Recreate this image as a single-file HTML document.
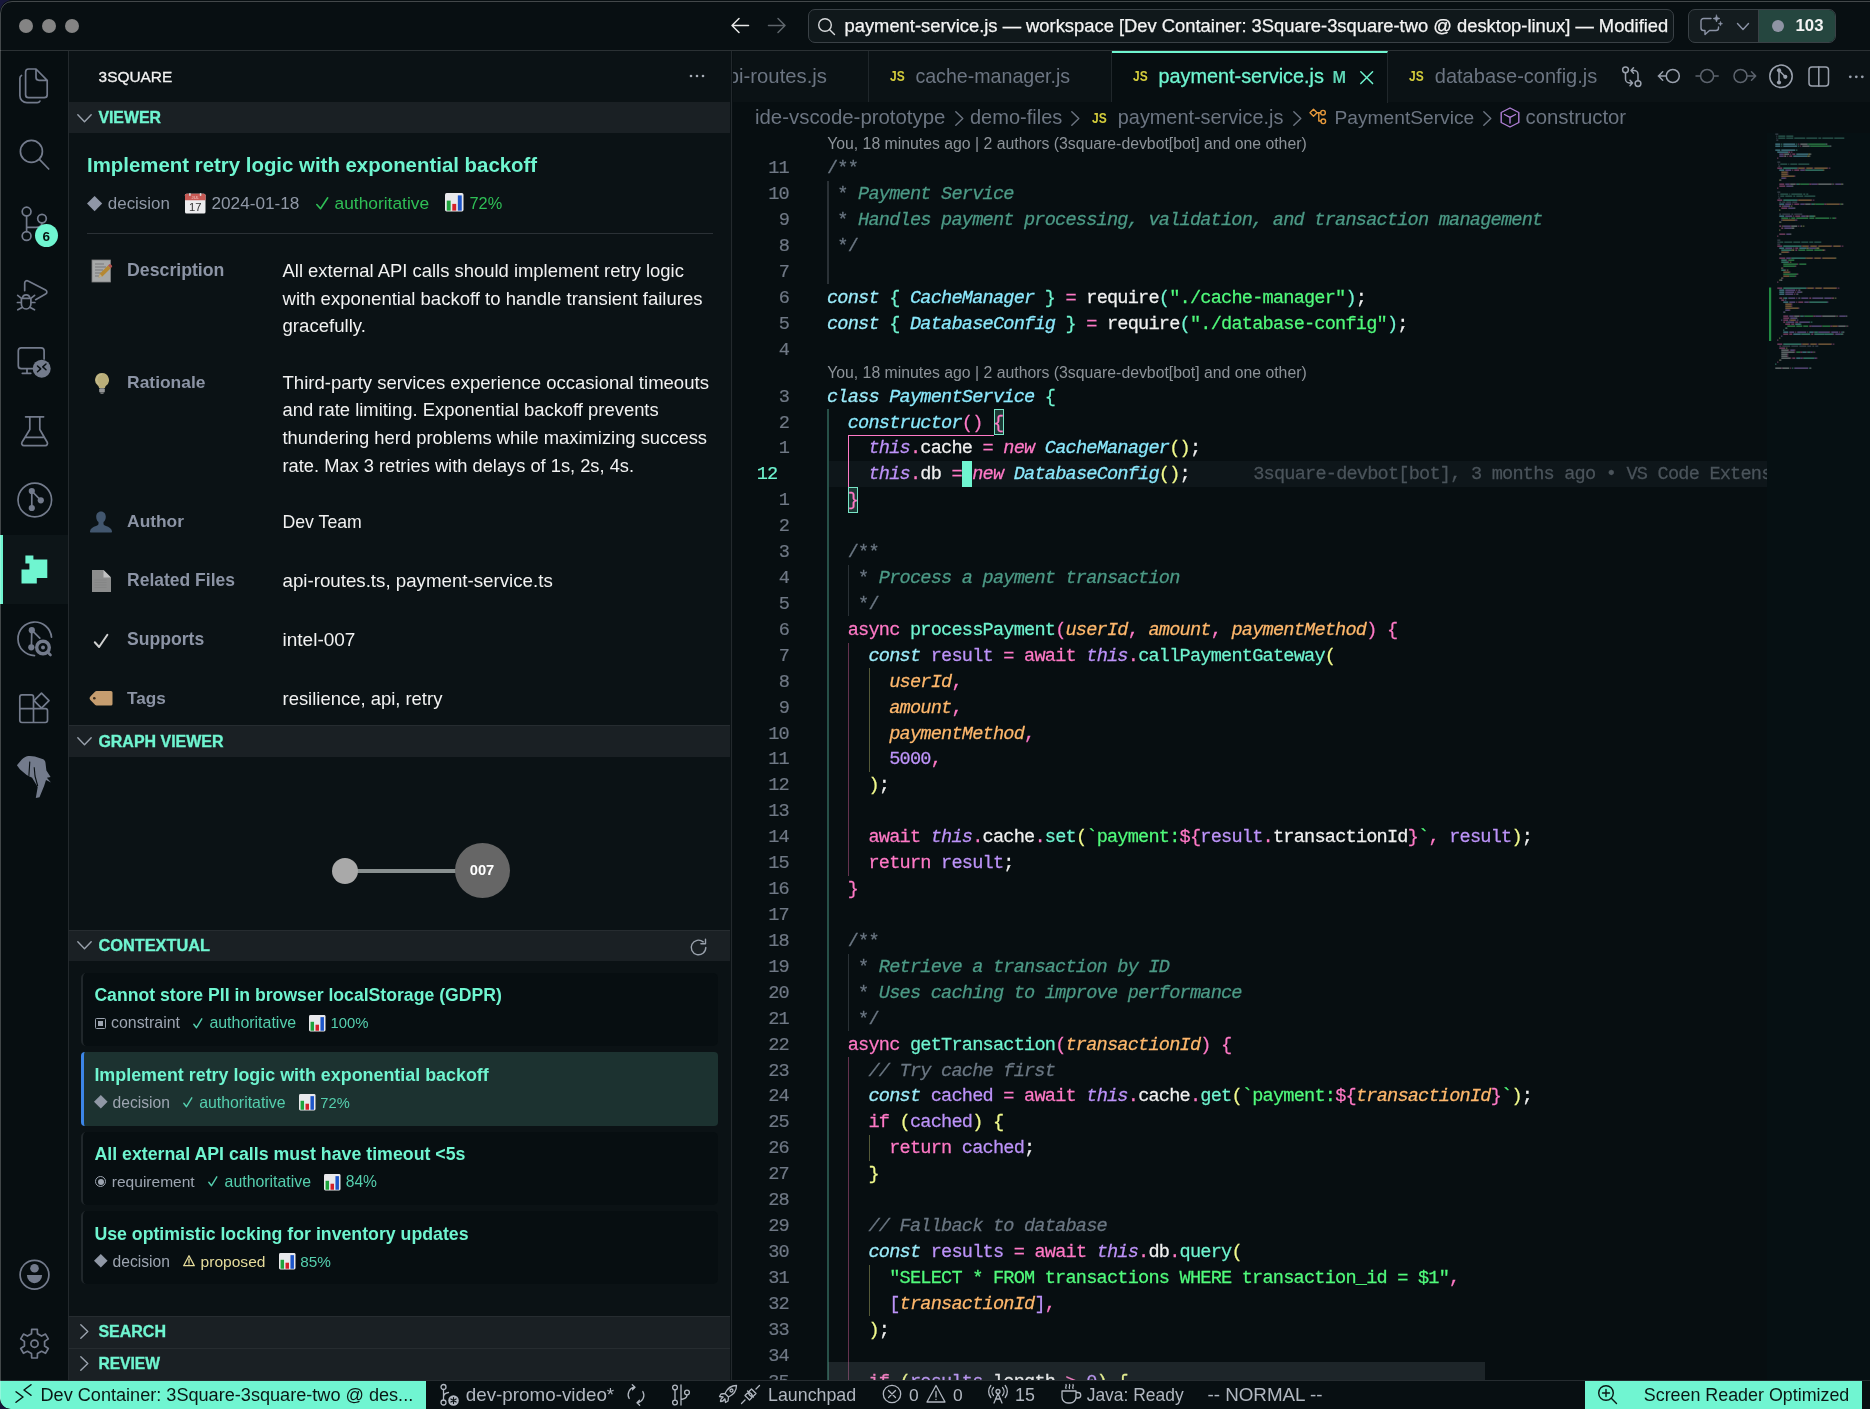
<!DOCTYPE html>
<html lang="en">
<head>
<meta charset="utf-8">
<title>payment-service.js — workspace</title>
<style>
*{box-sizing:border-box;margin:0;padding:0}
html,body{width:1870px;height:1409px;overflow:hidden;background:#17173a}
body{font-family:"Liberation Sans",sans-serif;color:#e6e6e6;position:relative}
.abs{position:absolute}
#win{position:absolute;left:0;top:0;width:1870px;height:1409px;border-radius:13px 0 0 11px;overflow:hidden;will-change:transform}
#winbg{position:absolute;left:0;top:0;width:1870px;height:1409px;background:#080f12;border-radius:13px 0 0 11px}
#wintop{position:absolute;left:0;top:1px;width:1884px;height:1420px;border:1px solid rgba(255,255,255,.24);z-index:50;border-radius:12px 0 0 11px;pointer-events:none}
svg{display:block;overflow:visible}
.t{position:absolute;white-space:pre;line-height:1}
/* title bar */
#titlebar{position:absolute;left:0;top:0;width:1870px;height:51px;background:#080f12;border-bottom:1px solid #2b3134}
.dot{position:absolute;top:19px;width:14px;height:14px;border-radius:50%;background:#848484}
#cmd{position:absolute;left:808px;top:9px;width:866px;height:34px;border:1px solid #3a4146;border-radius:7px;background:#10181b}
#cmd .t{left:35px;top:7px;font-size:17.6px;color:#f2f2f2;letter-spacing:0.12px}
#chat{position:absolute;left:1688px;top:9px;width:148px;height:34px;border:1px solid #3a4146;border-radius:7px;background:#141c1f;overflow:hidden}
#chat .pill{position:absolute;left:69px;top:0;width:79px;height:34px;background:#25463f;border-left:1px solid #3a4146}
/* activity bar */
#act{position:absolute;left:0;top:51px;width:69px;height:1330px;background:#070e11;border-right:1px solid #23292d}
.ai{position:absolute;left:19px;width:30px;height:30px}
.ai svg{width:30px;height:30px;fill:none;stroke:#7e8695;stroke-width:1.25;stroke-linecap:round;stroke-linejoin:round}
/* sidebar */
#side{position:absolute;left:69px;top:51px;width:663px;height:1330px;background:#0b1215;border-right:1px solid #23292d}
.sec{position:absolute;left:0;width:662px;height:31px;background:#1a2024}
.sec .lbl{position:absolute;left:29px;top:8px;font-size:15.5px;font-weight:700;color:#6ff5d0;letter-spacing:0.35px;line-height:1;white-space:pre}
.sec svg{position:absolute;left:7px;top:8px;width:16px;height:16px;fill:none;stroke:#9aa2ad;stroke-width:1.4;stroke-linecap:round;stroke-linejoin:round}
.lab{position:absolute;left:58px;font-size:17.3px;font-weight:700;color:#8b93a0;line-height:1;white-space:pre}
.val{position:absolute;left:213px;font-size:17.3px;color:#f0f0f0;line-height:27.7px;white-space:pre}
.ico{position:absolute;left:21px;width:22px;height:22px}
.card{position:absolute;left:13px;width:636px;height:73px;background:#070e11;border-left:2px solid #1d2428;border-radius:4px}
.card.sel{background:#1b3331;border-left:3px solid #3d8bea}
.card .ct{position:absolute;left:10px;top:14px;font-size:17.5px;font-weight:700;color:#6ff5d0;line-height:1;white-space:pre}
.card .cm{position:absolute;left:10px;top:42px;font-size:15px;color:#a0a8b4;line-height:1;white-space:pre;height:18px}
.card.sel .ct,.card.sel .cm{left:9px}
.gr{color:#3fb950}
.mint{color:#5fd9b8}
.bars{display:inline-block;vertical-align:-3px;width:17px;height:17px;margin:0 4px 0 0}
/* editor */
#ed{position:absolute;left:733px;top:51px;width:1137px;height:1330px;background:#070e11;overflow:hidden}
#tabs{position:absolute;left:0;top:0;width:1137px;height:51px;background:#0b1215}
.tab{position:absolute;top:0;height:51px;border-right:1px solid #23292d}
.tab .t{top:15px;font-size:19.4px;color:#6f7884}
.js{position:absolute;top:19px;font-size:12.5px;font-weight:700;color:#d8cf3e;letter-spacing:-0.3px;line-height:1}
#bc{position:absolute;left:0;top:51px;width:1137px;height:31px;background:#070e11}
#bc .t{top:6px;font-size:19.4px;color:#6f7884}
.lens{position:absolute;left:94px;font-size:15px;color:#8f959c;line-height:1;white-space:pre}
.ln{position:absolute;left:0;width:56px;text-align:right;font-family:"Liberation Mono",monospace;font-size:18.600px;letter-spacing:-.790px;color:#6f7885;line-height:26px;height:26px;white-space:pre;margin-top:1.350px;-webkit-text-stroke:.200px currentColor;transform:scaleY(1.03);transform-origin:0 18.400px}
.cl{position:absolute;left:94px;font-family:"Liberation Mono",monospace;font-size:18.600px;letter-spacing:-.790px;color:#f0f0f0;line-height:26px;height:26px;white-space:pre;margin-top:1.350px;-webkit-text-stroke:.250px currentColor;transform:scaleY(1.03);transform-origin:0 18.400px}
.cl i{font-style:italic}
.k{color:#9cecfb;font-style:italic}.c{color:#8be9fd;font-style:italic}
.p{color:#ff79c6}.g{color:#50fa7b}.m{color:#6ff5d0}.y{color:#f1fa8c}.u{color:#bd93f9}
.ui{color:#bd93f9;font-style:italic}.o{color:#ffb86c;font-style:italic}.pi{color:#ff79c6;font-style:italic}
.cm1{color:#6b7783}.cm2{color:#4c9a86;font-style:italic}.cm3{color:#6b7783;font-style:italic}
.guide{position:absolute;width:1px;background:#2a3236}
/* status bar */
#status{position:absolute;left:0;top:1381px;width:1870px;height:28px;background:#080f12;border-top:1px solid #23292d}
#status .t{top:5px;font-size:17.4px;color:#b4bac2}
.sb svg{fill:none;stroke:#b4bac2;stroke-width:1.2;stroke-linecap:round;stroke-linejoin:round}
</style>
</head>
<body>
<div id="winbg"></div>
<div id="win">
<div id="wintop"></div>
<div id="titlebar">
<div class="dot" style="left:19px"></div>
<div class="dot" style="left:42px"></div>
<div class="dot" style="left:65px"></div>
<svg class="abs" style="left:730px;top:16px" width="20" height="20" viewBox="0 0 20 20" fill="none" stroke="#e8e8e8" stroke-width="1.5" stroke-linecap="round" stroke-linejoin="round"><path d="M18.5 9.5H2M9 2.5L2 9.5L9 16.5"/></svg>
<svg class="abs" style="left:767px;top:16px" width="20" height="20" viewBox="0 0 20 20" fill="none" stroke="#5f666c" stroke-width="1.5" stroke-linecap="round" stroke-linejoin="round"><path d="M1.5 9.5H18M11 2.5L18 9.5L11 16.5"/></svg>
<div id="cmd"><svg class="abs" style="left:8px;top:7px" width="20" height="20" viewBox="0 0 20 20" fill="none" stroke="#d8dadc" stroke-width="1.4" stroke-linecap="round"><circle cx="8" cy="8" r="6.3"/><path d="M12.7 12.7L17.5 17.5"/></svg></div>
<div class="t" style="left:844.5px;top:15px;font-size:18.38px;line-height:21px;color:#f4f4f4;-webkit-text-stroke:.250px #f4f4f4;">payment-service.js — workspace [Dev Container: 3Square-3square-two @ desktop-linux] — Modified</div>
<div id="chat"><div class="pill"></div><svg class="abs" style="left:10px;top:4px" width="25" height="24" viewBox="0 0 25 24" fill="none" stroke="#8b93a6" stroke-width="1.4" stroke-linecap="round" stroke-linejoin="round"><path d="M12 4.5H4.5a2.5 2.5 0 0 0-2.5 2.5v7a2.5 2.5 0 0 0 2.5 2.5H6v4l4.5-4H17a2.5 2.5 0 0 0 2.5-2.5V13"/><path d="M17.5 1l.9 2.6 2.6.9-2.6.9-.9 2.6-.9-2.6-2.6-.9 2.6-.9z" fill="#8b93a6" stroke-width="0.6"/><path d="M21.5 7.5l.6 1.6 1.6.6-1.6.6-.6 1.6-.6-1.6-1.6-.6 1.6-.6z" fill="#8b93a6" stroke-width="0.4"/></svg><svg class="abs" style="left:47px;top:12px" width="14" height="10" viewBox="0 0 14 10" fill="none" stroke="#8b93a6" stroke-width="1.4" stroke-linecap="round" stroke-linejoin="round"><path d="M1.5 1.5L7 7.5L12.5 1.5"/></svg><div class="abs" style="left:83px;top:10px;width:12px;height:12px;border-radius:50%;background:#8f94a4"></div></div>
<div class="t" style="left:1795.5px;top:16px;font-size:16.78px;line-height:19px;font-weight:700;color:#f4f4f4;">103</div>
</div>
<div id="act"></div>
<div class="abs" style="left:0;top:535px;width:68px;height:69px;background:#0d1518"></div>
<div class="abs" style="left:0;top:535px;width:2.5px;height:69px;background:#6ff5d0"></div>
<svg class="abs" style="left:0;top:51px" width="69" height="1330" viewBox="0 51 69 1330" fill="none" stroke="#737b8c" stroke-width="1.7" stroke-linecap="round" stroke-linejoin="round">
<path d="M36 69H28.600a3 3 0 0 0-3 3v22.700a3 3 0 0 0 3 3h15.600a3 3 0 0 0 3-3V80.300z M36 69.300v8a3 3 0 0 0 3 3h8"/>
<path d="M21.5 75.5a3 3 0 0 0-1.6 2.7v17.5a7 7 0 0 0 7 7h10.3a3 3 0 0 0 2.7-1.6"/>
<circle cx="31.4" cy="151.4" r="11"/><path d="M39.4 159.4L48.7 169"/>
<circle cx="26.6" cy="211.6" r="4.4"/><circle cx="42" cy="218.6" r="4.3"/><circle cx="26.6" cy="236" r="4.4"/><path d="M26.6 216v15.6M42 223c0 4-3 4.3-6 4.3h-9.4"/>
<path d="M24.700 290.600v-7.600a2.300 2.300 0 0 1 3.400-2l17.500 9a2.300 2.300 0 0 1 0 4.100l-10 5.600"/>
<path d="M21.400 298.400h9.500v5.600a4.750 5 0 0 1-9.500 0z M22.300 298.400a3.900 4.300 0 0 1 7.700 0 M21.400 298.400l-3.700-3M30.900 298.400l3.700-3M21.400 302.500h-4M30.900 302.500h4M22.500 307.200l-4.700 2.600M29.800 307.200l4.700 2.600"/>
<path d="M33 368.7H21.3a3 3 0 0 1-3-3V350.8a3 3 0 0 1 3-3h19.8a3 3 0 0 1 3 3V359M27 369v4.3M22.3 373.3h8.5"/>
<circle cx="41.7" cy="368.7" r="9" fill="#737b8c" stroke="none"/><path d="M37.5 366l3.2 2.9-3.2 2.9M46 364l-3.2 2.9 3.2 2.9" stroke="#070e11" stroke-width="1.5"/>
<path d="M25.6 416.8h18M29.8 417v12.5L22 442.3a2.2 2.2 0 0 0 1.9 3.3h21.4a2.2 2.2 0 0 0 1.9-3.3L39.8 429.5V417M26 437.3h17.4"/>
<circle cx="34.8" cy="500" r="16.8"/><g fill="#737b8c" stroke="none"><circle cx="31.8" cy="491" r="3.1"/><circle cx="40.8" cy="500.3" r="3.1"/><circle cx="31.8" cy="508" r="3.1"/></g><path d="M31.8 491v17M31.8 491l9 9.3"/>
<path d="M25.4 555.6h8v4h13.9v18.4H36.8v5.4H21.5v-13.9h7.9v-6h-4z" fill="#6ff5d0" stroke="none"/>
<path d="M34.5 655.6a16.8 16.8 0 1 1 17-18.5"/><g fill="#737b8c" stroke="none"><circle cx="31.8" cy="630.2" r="3.1"/><circle cx="31.3" cy="647.3" r="3.1"/></g><path d="M31.8 630.2l-.4 17M31.8 630.2l8 8"/><circle cx="43" cy="647.5" r="6.3" stroke-width="3.4"/><circle cx="43" cy="647.5" r="2" fill="#737b8c" stroke="none"/><path d="M47.5 652l3 3" stroke-width="2.6"/>
<path d="M33.500 708.600v-11.500a2.200 2.200 0 0 0-2.200-2.200H22a2.200 2.200 0 0 0-2.200 2.200v23.200a2.200 2.200 0 0 0 2.200 2.200h23.300a2.200 2.200 0 0 0 2.200-2.200v-9.500a2.200 2.200 0 0 0-2.200-2.200H19.800M33.500 708.600v13.800"/><path d="M41.5 693.2L49.0 700.7L41.5 708.2L34.0 700.7z" stroke-linejoin="round"/>
<path d="M16.900 765.300L22 759.300C24 757.300 26.500 756.300 28.500 756.100C30.500 755.900 33 756.200 34.900 756.600L43.200 759.300C44.800 760.200 45.300 761.500 45.500 763L46.400 770.400L50.600 776.900L46.900 777.800L51 782.400L46 780.100L44.100 786.100L39.500 797.200L35.800 798.100L37.700 787L32.100 777.800L26.600 775L20.100 769.500z" fill="#737b8c" stroke="none"/><path d="M29.800 761.600L28.900 775.900M34.200 767.200L35 776 37.700 786" stroke="#070e11" stroke-width="1.100" stroke-linecap="butt"/>
<circle cx="34.5" cy="1274.700" r="14.400"/><circle cx="34.5" cy="1268.200" r="4.300" fill="#737b8c" stroke="none"/><path d="M26.900 1275h15.200a7.600 8.200 0 0 1-15.200 0z" fill="#737b8c" stroke="none"/>
<path d="M31.5 1333.8 L31.7 1329.4 L37.3 1329.4 L37.5 1333.8 L41.6 1336.1 L45.5 1334.1 L48.3 1338.9 L44.6 1341.4 L44.6 1346.0 L48.3 1348.5 L45.5 1353.3 L41.6 1351.3 L37.5 1353.6 L37.3 1358.0 L31.7 1358.0 L31.5 1353.6 L27.4 1351.3 L23.5 1353.3 L20.7 1348.5 L24.4 1346.0 L24.4 1341.4 L20.7 1338.9 L23.5 1334.1 L27.4 1336.1z"/><circle cx="34.5" cy="1343.7" r="3.6"/>
</svg>
<div class="abs" style="left:34.800px;top:224.400px;width:23px;height:23px;border-radius:50%;background:#6ff5d0"></div>
<div class="t" style="left:42.6px;top:229px;font-size:13.5px;line-height:15px;font-weight:700;color:#07120f;">6</div>
<div id="side"></div>
<div class="t" style="left:98.6px;top:68px;font-size:15.42px;line-height:17px;color:#f2f2f2;-webkit-text-stroke:.300px #f2f2f2;">3SQUARE</div>
<svg class="abs" style="left:689px;top:74px" width="16" height="4" viewBox="0 0 16 4" fill="#a7adb6"><circle cx="2" cy="2" r="1.3"/><circle cx="8" cy="2" r="1.3"/><circle cx="14" cy="2" r="1.3"/></svg>
<div class="abs" style="left:69px;top:102px;width:661px;height:31px;background:#1a2024;"></div>
<svg class="abs" style="left:76.5px;top:113.5px" width="15" height="9" viewBox="0 0 15 9" fill="none" stroke="#9aa2ad" stroke-width="1.4" stroke-linecap="round" stroke-linejoin="round"><path d="M0.8 0.8L7.5 7.800L14.200 0.800"/></svg>
<div class="t" style="left:98.4px;top:109px;font-size:15.87px;line-height:17px;font-weight:700;color:#6ff5d0;-webkit-text-stroke:.350px #6ff5d0;">VIEWER</div>
<div class="t" style="left:87.0px;top:154px;font-size:20.42px;line-height:22px;font-weight:700;color:#6ff5d0;">Implement retry logic with exponential backoff</div>
<svg class="abs" style="left:86.5px;top:195.9px" width="15.2" height="15.2" viewBox="-1 -1 2 2"><path d="M0-1L1 0L0 1L-1 0z" fill="#8f96a6"/></svg>
<div class="t" style="left:107.8px;top:194px;font-size:16.95px;line-height:19px;color:#9098a6;">decision</div>
<svg class="abs" style="left:184.5px;top:192.8px" width="20.5" height="20.5" viewBox="0 0 20 20"><rect x="0" y="0.8" width="20" height="19.2" rx="1.5" fill="#ececee"/><path d="M0 2.3a1.500 1.500 0 0 1 1.500-1.500h17a1.500 1.500 0 0 1 1.500 1.500V7H0z" fill="#c85a55"/><rect x="4" y="0" width="1.6" height="3" rx="0.8" fill="#d9d9d9"/><rect x="14.400" y="0" width="1.600" height="3" rx="0.800" fill="#d9d9d9"/><text x="10" y="17.500" font-family="Liberation Sans, sans-serif" font-size="11" text-anchor="middle" fill="#333">17</text><text x="10" y="6" font-family="Liberation Sans, sans-serif" font-size="4" text-anchor="middle" fill="#f3c9c6">JUL</text></svg>
<div class="t" style="left:211.5px;top:193px;font-size:17.2px;line-height:20px;color:#9098a6;">2024-01-18</div>
<svg class="abs" style="left:315.5px;top:196.5px" width="12.5" height="12.5" viewBox="0 0 12.5 12.5" fill="none" stroke="#2fbf56" stroke-width="1.6" stroke-linecap="round" stroke-linejoin="round"><path d="M0.8 7.5L4.5 11.7L11.7 0.8"/></svg>
<div class="t" style="left:334.5px;top:193px;font-size:17.38px;line-height:20px;color:#2fbf56;">authoritative</div>
<svg class="abs" style="left:444.7px;top:193.0px" width="18.5" height="18.5" viewBox="0 0 17 17"><rect x="0" y="0" width="17" height="17" rx="1.5" fill="#e9e9ec"/><rect x="1.6" y="7" width="3.6" height="9.2" fill="#1ea33c"/><rect x="6.700" y="10" width="3.600" height="6.200" fill="#d3202a"/><rect x="11.800" y="2.200" width="3.600" height="14" fill="#1d55c9"/></svg>
<div class="t" style="left:469.5px;top:194px;font-size:16.34px;line-height:18px;color:#2fbf56;">72%</div>
<div class="abs" style="left:86.5px;top:232.5px;width:626.5px;height:1px;background:#2b3136"></div>
<div class="t" style="left:127.1px;top:260px;font-size:17.71px;line-height:20px;font-weight:700;color:#8c94a5;">Description</div>
<div class="t" style="left:282.5px;top:260px;font-size:18.43px;line-height:21px;color:#f2f2f2;">All external API calls should implement retry logic</div>
<div class="t" style="left:282.5px;top:288px;font-size:18.55px;line-height:21px;color:#f2f2f2;">with exponential backoff to handle transient failures</div>
<div class="t" style="left:282.5px;top:315px;font-size:18.62px;line-height:21px;color:#f2f2f2;">gracefully.</div>
<div class="t" style="left:127.1px;top:372px;font-size:17.42px;line-height:20px;font-weight:700;color:#8c94a5;">Rationale</div>
<div class="t" style="left:282.5px;top:372px;font-size:18.54px;line-height:21px;color:#f2f2f2;">Third-party services experience occasional timeouts</div>
<div class="t" style="left:282.5px;top:399px;font-size:18.42px;line-height:21px;color:#f2f2f2;">and rate limiting. Exponential backoff prevents</div>
<div class="t" style="left:282.5px;top:427px;font-size:18.38px;line-height:21px;color:#f2f2f2;">thundering herd problems while maximizing success</div>
<div class="t" style="left:282.5px;top:455px;font-size:18.3px;line-height:21px;color:#f2f2f2;">rate. Max 3 retries with delays of 1s, 2s, 4s.</div>
<div class="t" style="left:127.1px;top:511px;font-size:17.36px;line-height:20px;font-weight:700;color:#8c94a5;">Author</div>
<div class="t" style="left:282.5px;top:512px;font-size:17.69px;line-height:20px;color:#f2f2f2;">Dev Team</div>
<div class="t" style="left:127.1px;top:570px;font-size:17.49px;line-height:20px;font-weight:700;color:#8c94a5;">Related Files</div>
<div class="t" style="left:282.5px;top:570px;font-size:18.72px;line-height:21px;color:#f2f2f2;">api-routes.ts, payment-service.ts</div>
<div class="t" style="left:127.1px;top:629px;font-size:17.57px;line-height:20px;font-weight:700;color:#8c94a5;">Supports</div>
<div class="t" style="left:282.5px;top:629px;font-size:19.03px;line-height:21px;color:#f2f2f2;">intel-007</div>
<div class="t" style="left:127.1px;top:688px;font-size:17.17px;line-height:20px;font-weight:700;color:#8c94a5;">Tags</div>
<div class="t" style="left:282.5px;top:688px;font-size:18.45px;line-height:21px;color:#f2f2f2;">resilience, api, retry</div>
<svg class="abs" style="left:91.5px;top:260px;opacity:.8" width="20" height="22" viewBox="0 0 20 22"><rect x="0" y="0" width="18.5" height="22" fill="#cfcfcf"/><rect x="0" y="0" width="18.500" height="22" fill="none" stroke="#9a9a9a" stroke-width="0.800"/><path d="M3 4h9M3 7h11M3 10h8M3 13h6M3 16h5" stroke="#8b8b8b" stroke-width="0.900"/><path d="M6.500 17.500l1.200-3.800L16 5.500l2.700 2.700-8.300 8.200z" fill="#e0a63a"/><path d="M16 5.500l1.300-1.200a1 1 0 0 1 1.400 0l1.200 1.200a1 1 0 0 1 0 1.400l-1.200 1.300z" fill="#d8635e"/><path d="M6.500 17.500l1.200-3.800 2.700 2.700z" fill="#e9d3a5"/></svg>
<svg class="abs" style="left:94.500px;top:372.500px;opacity:.8" width="14" height="21" viewBox="0 0 14 21"><path d="M7 0a7 7 0 0 0-4 12.700c.7.600 1 1.500 1 2.300h6c0-.800.300-1.700 1-2.300A7 7 0 0 0 7 0z" fill="#e6d693"/><path d="M7 1.500a5.500 5.500 0 0 0-3 10" stroke="#f4e6ad" stroke-width="1.200" fill="none"/><rect x="4.200" y="15.300" width="5.600" height="4.200" rx="1" fill="#b9b9b9"/><rect x="5.300" y="19.500" width="3.400" height="1.500" rx=".700" fill="#8a8a8a"/></svg>
<svg class="abs" style="left:90px;top:511px" width="22" height="22" viewBox="0 0 22 22"><path d="M11 0.500c3 0 4.800 2.300 4.800 5.200 0 2.300-1 4.300-2.300 5.400v1.600c0 1 .8 1.600 2.500 2.200 3 1 5.500 2.300 6 5.300.1.800-.3 1.300-1 1.300H1c-.700 0-1.100-.500-1-1.300.500-3 3-4.300 6-5.300 1.700-.600 2.500-1.200 2.500-2.200v-1.600C7.200 10 6.200 8 6.200 5.700 6.200 2.800 8 .500 11 .500z" fill="#42566e"/></svg>
<svg class="abs" style="left:91.500px;top:569.700px;opacity:.9" width="19" height="22" viewBox="0 0 19 22"><path d="M0 0h11.500L19 7.500V22H0z" fill="#9b9b9b"/><path d="M11.500 0L19 7.500h-7.500z" fill="#d5d5d5"/><path d="M2.500 10h12M2.500 12.500h12M2.500 15h12M2.500 17.500h12" stroke="#8e8e8e" stroke-width=".600"/></svg>
<svg class="abs" style="left:93.9px;top:633.9px" width="14.2" height="13.8" viewBox="0 0 14.2 13.8" fill="none" stroke="#d0d0d0" stroke-width="2" stroke-linecap="round" stroke-linejoin="round"><path d="M0.8 8.3L5.1 13.0L13.399999999999999 0.8"/></svg>
<svg class="abs" style="left:89.700px;top:691px" width="22.500" height="14.500" viewBox="0 0 22.500 14.500"><path d="M6.500 0H21a1.500 1.500 0 0 1 1.500 1.500v11.500a1.500 1.500 0 0 1-1.500 1.500H6.500a2 2 0 0 1-1.300-.500L.6 9.200a2.700 2.700 0 0 1 0-3.900L5.200.5A2 2 0 0 1 6.500 0z" fill="#c69d6f"/><circle cx="4.300" cy="7.250" r="1.300" fill="#3b2c1c"/></svg>
<div class="abs" style="left:69px;top:725px;width:661px;height:32px;background:#1a2024;border-top:1px solid #262c30"></div>
<svg class="abs" style="left:76.5px;top:736.5px" width="15" height="9" viewBox="0 0 15 9" fill="none" stroke="#9aa2ad" stroke-width="1.4" stroke-linecap="round" stroke-linejoin="round"><path d="M0.8 0.8L7.5 7.800L14.200 0.800"/></svg>
<div class="t" style="left:98.4px;top:733px;font-size:15.98px;line-height:17px;font-weight:700;color:#6ff5d0;-webkit-text-stroke:.350px #6ff5d0;">GRAPH VIEWER</div>
<div class="abs" style="left:345px;top:868.800px;width:137px;height:4px;background:#899090"></div>
<div class="abs" style="left:331.900px;top:857.500px;width:26.600px;height:26.600px;border-radius:50%;background:#a9a9a9"></div>
<div class="abs" style="left:454.500px;top:843.300px;width:55px;height:55px;border-radius:50%;background:#666"></div>
<div class="t" style="left:469.7px;top:862px;font-size:14.74px;line-height:16px;font-weight:700;color:#fff;">007</div>
<div class="abs" style="left:69px;top:929.5px;width:661px;height:31px;background:#1a2024;border-top:1px solid #262c30"></div>
<svg class="abs" style="left:76.5px;top:941.0px" width="15" height="9" viewBox="0 0 15 9" fill="none" stroke="#9aa2ad" stroke-width="1.4" stroke-linecap="round" stroke-linejoin="round"><path d="M0.8 0.8L7.5 7.800L14.200 0.800"/></svg>
<div class="t" style="left:98.4px;top:936px;font-size:16.33px;line-height:18px;font-weight:700;color:#6ff5d0;-webkit-text-stroke:.350px #6ff5d0;">CONTEXTUAL</div>
<svg class="abs" style="left:689px;top:937.500px" width="19" height="19" viewBox="0 0 19 19" fill="none" stroke="#9aa2ad" stroke-width="1.400" stroke-linecap="round" stroke-linejoin="round"><path d="M16.800 9.500a7.300 7.300 0 1 1-2.600-5.600"/><path d="M16.500 1.200v4.600h-4.600"/></svg>
<div class="abs" style="left:81px;top:973px;width:637px;height:73px;background:#070e11;border-left:2px solid #20272b;border-radius:5px"></div>
<div class="t" style="left:94.4px;top:985px;font-size:17.64px;line-height:20px;font-weight:700;color:#6ff5d0;">Cannot store PII in browser localStorage (GDPR)</div>
<div class="abs" style="left:95px;top:1018px;width:10.600px;height:10.600px;border:1.300px solid #9da5b1;border-radius:1.500px"></div><div class="abs" style="left:97.600px;top:1020.6px;width:5.400px;height:5.400px;background:#9da5b1"></div>
<div class="t" style="left:111.0px;top:1014px;font-size:15.92px;line-height:17px;color:#9da5b1;">constraint</div>
<svg class="abs" style="left:193.3px;top:1017.5px" width="9.6" height="10.5" viewBox="0 0 9.6 10.5" fill="none" stroke="#55cfae" stroke-width="1.4" stroke-linecap="round" stroke-linejoin="round"><path d="M0.8 6.3L3.5 9.7L8.799999999999999 0.8"/></svg>
<div class="t" style="left:209.4px;top:1014px;font-size:15.95px;line-height:17px;color:#55cfae;">authoritative</div>
<svg class="abs" style="left:308.8px;top:1015.4px" width="16.5" height="16.5" viewBox="0 0 17 17"><rect x="0" y="0" width="17" height="17" rx="1.5" fill="#e9e9ec"/><rect x="1.6" y="7" width="3.6" height="9.2" fill="#1ea33c"/><rect x="6.700" y="10" width="3.600" height="6.200" fill="#d3202a"/><rect x="11.800" y="2.200" width="3.600" height="14" fill="#1d55c9"/></svg>
<div class="t" style="left:330.5px;top:1015px;font-size:14.86px;line-height:16px;color:#55cfae;">100%</div>
<div class="abs" style="left:81px;top:1052px;width:637px;height:73.500px;background:#1c3230;border-left:3px solid #3c86e8;border-radius:4px"></div>
<div class="t" style="left:94.4px;top:1065px;font-size:17.89px;line-height:20px;font-weight:700;color:#6ff5d0;">Implement retry logic with exponential backoff</div>
<svg class="abs" style="left:94.3px;top:1095.4px" width="13.6" height="13.6" viewBox="-1 -1 2 2"><path d="M0-1L1 0L0 1L-1 0z" fill="#9098a6"/></svg>
<div class="t" style="left:112.6px;top:1094px;font-size:15.64px;line-height:17px;color:#9da5b1;">decision</div>
<svg class="abs" style="left:183.2px;top:1096.5px" width="9.6" height="10.5" viewBox="0 0 9.6 10.5" fill="none" stroke="#55cfae" stroke-width="1.4" stroke-linecap="round" stroke-linejoin="round"><path d="M0.8 6.3L3.5 9.7L8.799999999999999 0.8"/></svg>
<div class="t" style="left:199.2px;top:1094px;font-size:15.86px;line-height:17px;color:#55cfae;">authoritative</div>
<svg class="abs" style="left:299.0px;top:1094.4px" width="16.5" height="16.5" viewBox="0 0 17 17"><rect x="0" y="0" width="17" height="17" rx="1.5" fill="#e9e9ec"/><rect x="1.6" y="7" width="3.6" height="9.2" fill="#1ea33c"/><rect x="6.700" y="10" width="3.600" height="6.200" fill="#d3202a"/><rect x="11.800" y="2.200" width="3.600" height="14" fill="#1d55c9"/></svg>
<div class="t" style="left:320.3px;top:1095px;font-size:14.69px;line-height:16px;color:#55cfae;">72%</div>
<div class="abs" style="left:81px;top:1131.5px;width:637px;height:73px;background:#070e11;border-left:2px solid #20272b;border-radius:5px"></div>
<div class="t" style="left:94.4px;top:1144px;font-size:17.77px;line-height:20px;font-weight:700;color:#6ff5d0;">All external API calls must have timeout &lt;5s</div>
<div class="abs" style="left:95px;top:1176.0px;width:11.400px;height:11.400px;border:1.300px solid #9da5b1;border-radius:50%"></div><div class="abs" style="left:97.500px;top:1178.5px;width:6.400px;height:6.400px;background:#9da5b1;border-radius:50%"></div>
<div class="t" style="left:111.8px;top:1173px;font-size:15.54px;line-height:17px;color:#9da5b1;">requirement</div>
<svg class="abs" style="left:208.0px;top:1176.0px" width="9.6" height="10.5" viewBox="0 0 9.6 10.5" fill="none" stroke="#55cfae" stroke-width="1.4" stroke-linecap="round" stroke-linejoin="round"><path d="M0.8 6.3L3.5 9.7L8.799999999999999 0.8"/></svg>
<div class="t" style="left:224.6px;top:1173px;font-size:15.86px;line-height:17px;color:#55cfae;">authoritative</div>
<svg class="abs" style="left:323.8px;top:1173.9px" width="16.5" height="16.5" viewBox="0 0 17 17"><rect x="0" y="0" width="17" height="17" rx="1.5" fill="#e9e9ec"/><rect x="1.6" y="7" width="3.6" height="9.2" fill="#1ea33c"/><rect x="6.700" y="10" width="3.600" height="6.200" fill="#d3202a"/><rect x="11.800" y="2.200" width="3.600" height="14" fill="#1d55c9"/></svg>
<div class="t" style="left:345.7px;top:1173px;font-size:15.64px;line-height:17px;color:#55cfae;">84%</div>
<div class="abs" style="left:81px;top:1211px;width:637px;height:73px;background:#070e11;border-left:2px solid #20272b;border-radius:5px"></div>
<div class="t" style="left:94.4px;top:1224px;font-size:17.73px;line-height:20px;font-weight:700;color:#6ff5d0;">Use optimistic locking for inventory updates</div>
<svg class="abs" style="left:94.3px;top:1254.4px" width="13.6" height="13.6" viewBox="-1 -1 2 2"><path d="M0-1L1 0L0 1L-1 0z" fill="#9098a6"/></svg>
<div class="t" style="left:112.6px;top:1253px;font-size:15.64px;line-height:17px;color:#9da5b1;">decision</div>
<svg class="abs" style="left:183.200px;top:1255px" width="12" height="11.500" viewBox="0 0 12 11.500" fill="none" stroke="#e6dc9b" stroke-width="1.300" stroke-linejoin="round" stroke-linecap="round"><path d="M6 .800L11.300 10.700H.700z"/><path d="M6 4.200v3.200M6 8.900v.2" stroke-width="1.400"/></svg>
<div class="t" style="left:200.6px;top:1253px;font-size:15.56px;line-height:17px;color:#e6dc9b;">proposed</div>
<svg class="abs" style="left:278.9px;top:1253.4px" width="16.5" height="16.5" viewBox="0 0 17 17"><rect x="0" y="0" width="17" height="17" rx="1.5" fill="#e9e9ec"/><rect x="1.6" y="7" width="3.6" height="9.2" fill="#1ea33c"/><rect x="6.700" y="10" width="3.600" height="6.200" fill="#d3202a"/><rect x="11.800" y="2.200" width="3.600" height="14" fill="#1d55c9"/></svg>
<div class="t" style="left:300.3px;top:1253px;font-size:15.34px;line-height:17px;color:#55cfae;">85%</div>
<div class="abs" style="left:69px;top:1316px;width:661px;height:32px;background:#1a2024;border-top:1px solid #262c30"></div>
<svg class="abs" style="left:80px;top:1324.3px" width="9" height="15" viewBox="0 0 9 15" fill="none" stroke="#9aa2ad" stroke-width="1.4" stroke-linecap="round" stroke-linejoin="round"><path d="M0.8 0.8L7.800 7.500L0.800 14.200"/></svg>
<div class="t" style="left:98.4px;top:1323px;font-size:16.01px;line-height:17px;font-weight:700;color:#6ff5d0;-webkit-text-stroke:.350px #6ff5d0;">SEARCH</div>
<div class="abs" style="left:69px;top:1347.5px;width:661px;height:33px;background:#1a2024;border-top:1px solid #262c30"></div>
<svg class="abs" style="left:80px;top:1355.8px" width="9" height="15" viewBox="0 0 9 15" fill="none" stroke="#9aa2ad" stroke-width="1.4" stroke-linecap="round" stroke-linejoin="round"><path d="M0.8 0.8L7.800 7.500L0.800 14.200"/></svg>
<div class="t" style="left:98.4px;top:1355px;font-size:15.62px;line-height:17px;font-weight:700;color:#6ff5d0;-webkit-text-stroke:.350px #6ff5d0;">REVIEW</div>
<div id="ed"></div>
<div class="abs" style="left:733px;top:51px;width:1137px;height:51px;background:#0b1215"></div>
<div class="abs" style="left:733px;top:51px;width:136px;height:51px;overflow:hidden;border-right:1px solid #20272b"><div class="t" style="left:-16.5px;top:14px;font-size:20.29px;line-height:22px;color:#6c7582;">api-routes.js</div>
</div>
<div class="abs" style="left:869px;top:51px;width:243px;height:51px;border-right:1px solid #20272b"></div>
<div class="t" style="left:890.0px;top:67px;font-size:15.4px;line-height:17px;font-weight:700;color:#d3cc3b;transform:scaleX(.78);transform-origin:0 0;">JS</div>
<div class="t" style="left:915.4px;top:65px;font-size:19.61px;line-height:22px;color:#6c7582;">cache-manager.js</div>
<div class="abs" style="left:1112px;top:51px;width:276px;height:51.500px;background:#070e11;border-top:2px solid #6ff5d0;border-right:1px solid #20272b"></div>
<div class="t" style="left:1132.5px;top:67px;font-size:15.4px;line-height:17px;font-weight:700;color:#d3cc3b;transform:scaleX(.78);transform-origin:0 0;">JS</div>
<div class="t" style="left:1158.4px;top:65px;font-size:19.87px;line-height:22px;color:#6ff5d0;-webkit-text-stroke:.300px #6ff5d0;">payment-service.js</div>
<div class="t" style="left:1332.5px;top:68px;font-size:16.21px;line-height:18px;font-weight:700;color:#5fd6b6;">M</div>
<svg class="abs" style="left:1360.400px;top:70.800px" width="13.400" height="13.400" viewBox="0 0 13.400 13.400" fill="none" stroke="#6ff5d0" stroke-width="1.500" stroke-linecap="round"><path d="M.800.800l11.800 11.800M12.600.800L.800 12.600"/></svg>
<div class="t" style="left:1409.3px;top:67px;font-size:15.4px;line-height:17px;font-weight:700;color:#d3cc3b;transform:scaleX(.78);transform-origin:0 0;">JS</div>
<div class="t" style="left:1434.8px;top:65px;font-size:20.02px;line-height:22px;color:#6c7582;">database-config.js</div>
<svg class="abs" style="left:1615px;top:60px" width="255" height="34" viewBox="1615 60 255 34" fill="none" stroke="#9aa1ad" stroke-width="1.500" stroke-linecap="round" stroke-linejoin="round"><circle cx="1625.500" cy="69.800" r="2.900"/><circle cx="1638" cy="83.600" r="2.900"/><path d="M1625.500 72.700v6.300a4 4 0 0 0 4 4h2.500M1630 80.300l2.500 2.700-2.500 2.700"/><path d="M1638 80.700v-6.300a4 4 0 0 0-4-4h-2.500M1633.500 73.200l-2.500-2.800 2.500-2.700"/><circle cx="1672.800" cy="76" r="6.500"/><path d="M1666.300 76h-8M1662.700 71.800l-4.200 4.200 4.200 4.200"/><g stroke="#5d646e"><circle cx="1707.100" cy="76" r="6.500"/><path d="M1696 76h4.500M1713.700 76h4.500"/><circle cx="1740.500" cy="76" r="6.500"/><path d="M1747 76h8.500M1751.500 71.800l4.200 4.200-4.200 4.200"/></g><circle cx="1781" cy="76.300" r="11.200"/><g fill="#9aa1ad" stroke="none"><circle cx="1779" cy="70.300" r="2.100"/><circle cx="1785.300" cy="76.800" r="2.100"/><circle cx="1779" cy="82.500" r="2.100"/></g><path d="M1779 70.300v12.200M1779 70.300l6.300 6.500"/><rect x="1809" y="67" width="19.500" height="19" rx="3"/><path d="M1818.800 67v19"/><g fill="#9aa1ad" stroke="none"><circle cx="1850.300" cy="76.800" r="1.400"/><circle cx="1856.300" cy="76.800" r="1.400"/><circle cx="1862.300" cy="76.800" r="1.400"/></g></svg>
<div class="t" style="left:755.0px;top:106px;font-size:20.4px;line-height:22px;color:#6c7582;">ide-vscode-prototype</div>
<svg class="abs" style="left:954.5px;top:110.500px" width="9" height="15" viewBox="0 0 9 15" fill="none" stroke="#6c7582" stroke-width="1.400" stroke-linecap="round" stroke-linejoin="round"><path d="M.800.800L7.800 7.500L.800 14.200"/></svg>
<div class="t" style="left:970.0px;top:106px;font-size:20.01px;line-height:22px;color:#6c7582;">demo-files</div>
<svg class="abs" style="left:1070.9px;top:110.500px" width="9" height="15" viewBox="0 0 9 15" fill="none" stroke="#6c7582" stroke-width="1.400" stroke-linecap="round" stroke-linejoin="round"><path d="M.800.800L7.800 7.500L.800 14.200"/></svg>
<div class="t" style="left:1091.7px;top:109px;font-size:15.4px;line-height:17px;font-weight:700;color:#d3cc3b;transform:scaleX(.78);transform-origin:0 0;">JS</div>
<div class="t" style="left:1117.8px;top:106px;font-size:19.87px;line-height:22px;color:#6c7582;">payment-service.js</div>
<svg class="abs" style="left:1292.5px;top:110.500px" width="9" height="15" viewBox="0 0 9 15" fill="none" stroke="#6c7582" stroke-width="1.400" stroke-linecap="round" stroke-linejoin="round"><path d="M.800.800L7.800 7.500L.800 14.200"/></svg>
<svg class="abs" style="left:1309px;top:108px" width="19" height="19" viewBox="0 0 19 19" fill="none" stroke="#e89a3c" stroke-width="1.400" stroke-linejoin="round" stroke-linecap="round"><path d="M4.500 1.200L8 4.700 4.500 8.200 1 4.700z"/><path d="M8 4.700h3.500M9.800 4.700v8.300h2"/><circle cx="14" cy="4.700" r="2.300"/><circle cx="14.300" cy="13.300" r="2.300"/></svg>
<div class="t" style="left:1334.5px;top:107px;font-size:19.21px;line-height:21px;color:#6c7582;">PaymentService</div>
<svg class="abs" style="left:1483px;top:110.500px" width="9" height="15" viewBox="0 0 9 15" fill="none" stroke="#6c7582" stroke-width="1.400" stroke-linecap="round" stroke-linejoin="round"><path d="M.800.800L7.800 7.500L.800 14.200"/></svg>
<svg class="abs" style="left:1499.500px;top:107px" width="20" height="21" viewBox="0 0 20 21" fill="none" stroke="#b180d7" stroke-width="1.400" stroke-linejoin="round" stroke-linecap="round"><path d="M10 1L18.800 5.500v10L10 20 1.200 15.500v-10z"/><path d="M4.500 7.500L10 10.300l5.500-2.800M10 10.300v5.700"/></svg>
<div class="t" style="left:1525.6px;top:106px;font-size:20.34px;line-height:22px;color:#6c7582;">constructor</div>
<div class="abs" style="left:733px;top:133px;width:1034px;height:1247px;overflow:hidden"><div class="abs" style="left:-733px;top:-133px;width:1870px;height:1409px">
<div class="abs" style="left:828.7px;top:461.0px;width:938.3px;height:25.9px;background:#0e161a"></div>
<div class="abs" style="left:827.2px;top:180.7px;width:1.5px;height:103.7px;background:#2a3136"></div>
<div class="abs" style="left:827.2px;top:409.2px;width:1.5px;height:985.0px;background:#275048"></div>
<div class="abs" style="left:847.9px;top:564.7px;width:1.5px;height:51.8px;background:#2a3136"></div>
<div class="abs" style="left:847.9px;top:642.5px;width:1.5px;height:233.3px;background:#64324f"></div>
<div class="abs" style="left:847.9px;top:953.5px;width:1.5px;height:77.8px;background:#2a3136"></div>
<div class="abs" style="left:847.9px;top:1057.2px;width:1.5px;height:337.0px;background:#64324f"></div>
<div class="abs" style="left:868.7px;top:668.4px;width:1.5px;height:103.7px;background:#555a38"></div>
<div class="abs" style="left:868.7px;top:1134.9px;width:1.5px;height:25.9px;background:#555a38"></div>
<div class="abs" style="left:868.7px;top:1264.5px;width:1.5px;height:51.8px;background:#555a38"></div>
<div class="abs" style="left:848.2px;top:434.5px;width:145.8px;height:1.2px;background:#ff79c6"></div>
<div class="abs" style="left:848.2px;top:434.5px;width:1.2px;height:52.4px;background:#ff79c6"></div>
<div class="abs" style="left:993.5px;top:409.2px;width:10.4px;height:25.9px;background:#1b3a35;border:1px solid #79e5c7"></div>
<div class="abs" style="left:847.5px;top:486.9px;width:10.4px;height:25.9px;background:#1b3a35;border:1px solid #79e5c7"></div>
<div class="abs" style="left:962.1px;top:461.0px;width:10.2px;height:25.9px;background:#6ff5d0"></div>
<div class="t" style="left:827.2px;top:135px;font-size:15.81px;line-height:17px;color:#8d9399;">You, 18 minutes ago | 2 authors (3square-devbot[bot] and one other)</div>
<div class="ln" style="left:733px;top:154.8px">11</div>
<div class="cl" style="left:827.0px;top:154.8px"><span class="cm1">/**</span></div>
<div class="ln" style="left:733px;top:180.7px">10</div>
<div class="cl" style="left:827.0px;top:180.7px"><span class="cm1"> * </span><span class="cm2">Payment Service</span></div>
<div class="ln" style="left:733px;top:206.6px">9</div>
<div class="cl" style="left:827.0px;top:206.6px"><span class="cm1"> * </span><span class="cm2">Handles payment processing, validation, and transaction management</span></div>
<div class="ln" style="left:733px;top:232.6px">8</div>
<div class="cl" style="left:827.0px;top:232.6px"><span class="cm1"> */</span></div>
<div class="ln" style="left:733px;top:258.5px">7</div>
<div class="ln" style="left:733px;top:284.4px">6</div>
<div class="cl" style="left:827.0px;top:284.4px"><span class="k">const</span> <span class="m">{</span> <span class="c">CacheManager</span> <span class="m">}</span> <span class="p">=</span> require<span class="m">(</span><span class="g">"./cache-manager"</span><span class="m">)</span>;</div>
<div class="ln" style="left:733px;top:310.3px">5</div>
<div class="cl" style="left:827.0px;top:310.3px"><span class="k">const</span> <span class="m">{</span> <span class="c">DatabaseConfig</span> <span class="m">}</span> <span class="p">=</span> require<span class="m">(</span><span class="g">"./database-config"</span><span class="m">)</span>;</div>
<div class="ln" style="left:733px;top:336.2px">4</div>
<div class="t" style="left:827.2px;top:364px;font-size:15.81px;line-height:17px;color:#8d9399;">You, 18 minutes ago | 2 authors (3square-devbot[bot] and one other)</div>
<div class="ln" style="left:733px;top:383.3px">3</div>
<div class="cl" style="left:827.0px;top:383.3px"><span class="k">class</span> <span class="c">PaymentService</span> <span class="m">{</span></div>
<div class="ln" style="left:733px;top:409.2px">2</div>
<div class="cl" style="left:827.0px;top:409.2px">  <span class="c">constructor</span><span class="p">()</span> <span class="p">{</span></div>
<div class="ln" style="left:733px;top:435.1px">1</div>
<div class="cl" style="left:827.0px;top:435.1px">    <span class="ui">this</span><span class="p">.</span>cache <span class="p">=</span> <span class="pi">new</span> <span class="c">CacheManager</span><span class="y">()</span>;</div>
<div class="ln" style="left:733px;top:461.0px;width:44.500px;color:#6ff5d0">12</div>
<div class="cl" style="left:827.0px;top:461.0px">    <span class="ui">this</span><span class="p">.</span>db <span class="p">=</span> <span class="pi">new</span> <span class="c">DatabaseConfig</span><span class="y">()</span>;</div>
<div class="cl" style="left:1253.200px;top:461.0px;color:#4b545b;width:513.8px;overflow:hidden">3square-devbot[bot], 3 months ago • VS Code Extension</div>
<div class="ln" style="left:733px;top:486.9px">1</div>
<div class="cl" style="left:827.0px;top:486.9px">  <span class="p">}</span></div>
<div class="ln" style="left:733px;top:512.9px">2</div>
<div class="ln" style="left:733px;top:538.8px">3</div>
<div class="cl" style="left:827.0px;top:538.8px">  <span class="cm1">/**</span></div>
<div class="ln" style="left:733px;top:564.7px">4</div>
<div class="cl" style="left:827.0px;top:564.7px">  <span class="cm1"> * </span><span class="cm2">Process a payment transaction</span></div>
<div class="ln" style="left:733px;top:590.6px">5</div>
<div class="cl" style="left:827.0px;top:590.6px">  <span class="cm1"> */</span></div>
<div class="ln" style="left:733px;top:616.5px">6</div>
<div class="cl" style="left:827.0px;top:616.5px">  <span class="p">async</span> <span class="m">processPayment</span><span class="p">(</span><span class="o">userId</span><span class="p">,</span> <span class="o">amount</span><span class="p">,</span> <span class="o">paymentMethod</span><span class="p">)</span> <span class="p">{</span></div>
<div class="ln" style="left:733px;top:642.5px">7</div>
<div class="cl" style="left:827.0px;top:642.5px">    <span class="k">const</span> <span class="u">result</span> <span class="p">=</span> <span class="p">await</span> <span class="ui">this</span><span class="p">.</span><span class="m">callPaymentGateway</span><span class="y">(</span></div>
<div class="ln" style="left:733px;top:668.4px">8</div>
<div class="cl" style="left:827.0px;top:668.4px">      <span class="o">userId</span><span class="p">,</span></div>
<div class="ln" style="left:733px;top:694.3px">9</div>
<div class="cl" style="left:827.0px;top:694.3px">      <span class="o">amount</span><span class="p">,</span></div>
<div class="ln" style="left:733px;top:720.2px">10</div>
<div class="cl" style="left:827.0px;top:720.2px">      <span class="o">paymentMethod</span><span class="p">,</span></div>
<div class="ln" style="left:733px;top:746.1px">11</div>
<div class="cl" style="left:827.0px;top:746.1px">      <span class="u">5000</span><span class="p">,</span></div>
<div class="ln" style="left:733px;top:772.1px">12</div>
<div class="cl" style="left:827.0px;top:772.1px">    <span class="y">)</span>;</div>
<div class="ln" style="left:733px;top:798.0px">13</div>
<div class="ln" style="left:733px;top:823.9px">14</div>
<div class="cl" style="left:827.0px;top:823.9px">    <span class="p">await</span> <span class="ui">this</span><span class="p">.</span>cache<span class="p">.</span><span class="m">set</span><span class="y">(</span><span class="g">`payment:</span><span class="p">${</span><span class="u">result</span><span class="p">.</span>transactionId<span class="p">}</span><span class="g">`</span><span class="p">,</span> <span class="u">result</span><span class="y">)</span>;</div>
<div class="ln" style="left:733px;top:849.8px">15</div>
<div class="cl" style="left:827.0px;top:849.8px">    <span class="p">return</span> <span class="u">result</span>;</div>
<div class="ln" style="left:733px;top:875.7px">16</div>
<div class="cl" style="left:827.0px;top:875.7px">  <span class="p">}</span></div>
<div class="ln" style="left:733px;top:901.7px">17</div>
<div class="ln" style="left:733px;top:927.6px">18</div>
<div class="cl" style="left:827.0px;top:927.6px">  <span class="cm1">/**</span></div>
<div class="ln" style="left:733px;top:953.5px">19</div>
<div class="cl" style="left:827.0px;top:953.5px">  <span class="cm1"> * </span><span class="cm2">Retrieve a transaction by ID</span></div>
<div class="ln" style="left:733px;top:979.4px">20</div>
<div class="cl" style="left:827.0px;top:979.4px">  <span class="cm1"> * </span><span class="cm2">Uses caching to improve performance</span></div>
<div class="ln" style="left:733px;top:1005.3px">21</div>
<div class="cl" style="left:827.0px;top:1005.3px">  <span class="cm1"> */</span></div>
<div class="ln" style="left:733px;top:1031.3px">22</div>
<div class="cl" style="left:827.0px;top:1031.3px">  <span class="p">async</span> <span class="m">getTransaction</span><span class="p">(</span><span class="o">transactionId</span><span class="p">)</span> <span class="p">{</span></div>
<div class="ln" style="left:733px;top:1057.2px">23</div>
<div class="cl" style="left:827.0px;top:1057.2px">    <span class="cm3">// Try cache first</span></div>
<div class="ln" style="left:733px;top:1083.1px">24</div>
<div class="cl" style="left:827.0px;top:1083.1px">    <span class="k">const</span> <span class="u">cached</span> <span class="p">=</span> <span class="p">await</span> <span class="ui">this</span><span class="p">.</span>cache<span class="p">.</span><span class="m">get</span><span class="y">(</span><span class="g">`payment:</span><span class="p">${</span><span class="o">transactionId</span><span class="p">}</span><span class="g">`</span><span class="y">)</span>;</div>
<div class="ln" style="left:733px;top:1109.0px">25</div>
<div class="cl" style="left:827.0px;top:1109.0px">    <span class="p">if</span> <span class="y">(</span><span class="u">cached</span><span class="y">)</span> <span class="y">{</span></div>
<div class="ln" style="left:733px;top:1134.9px">26</div>
<div class="cl" style="left:827.0px;top:1134.9px">      <span class="p">return</span> <span class="u">cached</span>;</div>
<div class="ln" style="left:733px;top:1160.9px">27</div>
<div class="cl" style="left:827.0px;top:1160.9px">    <span class="y">}</span></div>
<div class="ln" style="left:733px;top:1186.8px">28</div>
<div class="ln" style="left:733px;top:1212.7px">29</div>
<div class="cl" style="left:827.0px;top:1212.7px">    <span class="cm3">// Fallback to database</span></div>
<div class="ln" style="left:733px;top:1238.6px">30</div>
<div class="cl" style="left:827.0px;top:1238.6px">    <span class="k">const</span> <span class="u">results</span> <span class="p">=</span> <span class="p">await</span> <span class="ui">this</span><span class="p">.</span>db<span class="p">.</span><span class="m">query</span><span class="y">(</span></div>
<div class="ln" style="left:733px;top:1264.5px">31</div>
<div class="cl" style="left:827.0px;top:1264.5px">      <span class="g">"SELECT * FROM transactions WHERE transaction_id = $1"</span><span class="p">,</span></div>
<div class="ln" style="left:733px;top:1290.5px">32</div>
<div class="cl" style="left:827.0px;top:1290.5px">      <span class="u">[</span><span class="o">transactionId</span><span class="u">]</span><span class="p">,</span></div>
<div class="ln" style="left:733px;top:1316.4px">33</div>
<div class="cl" style="left:827.0px;top:1316.4px">    <span class="y">)</span>;</div>
<div class="ln" style="left:733px;top:1342.3px">34</div>
<div class="ln" style="left:733px;top:1368.2px">35</div>
<div class="cl" style="left:827.0px;top:1368.2px">    <span class="p">if</span> <span class="y">(</span><span class="u">results</span><span class="p">.</span>length <span class="p">&gt;</span> <span class="u">0</span><span class="y">)</span> <span class="y">{</span></div>
</div></div>
<div class="abs" style="left:827.500px;top:1362px;width:657.500px;height:18px;background:rgba(150,160,168,.16)"></div>
<div class="abs" style="left:1767px;top:133px;width:103px;height:1247px;background:#061013"></div>
<svg class="abs" style="left:1767px;top:133px" width="103" height="250" viewBox="1767 133 103 250" opacity=".7"><rect x="1769" y="287.500" width="2.200" height="53.500" fill="#2fbf56"/><rect x="1775.3" y="133.5" width="3.0" height="1.300" fill="#4a5560"/><rect x="1776.3" y="135.5" width="1.0" height="1.300" fill="#4a5560"/><rect x="1778.3" y="135.5" width="7.0" height="1.300" fill="#3a7568"/><rect x="1786.3" y="135.5" width="7.0" height="1.300" fill="#3a7568"/><rect x="1776.3" y="137.5" width="1.0" height="1.300" fill="#4a5560"/><rect x="1778.3" y="137.5" width="7.0" height="1.300" fill="#3a7568"/><rect x="1786.3" y="137.5" width="7.0" height="1.300" fill="#3a7568"/><rect x="1794.3" y="137.5" width="11.0" height="1.300" fill="#3a7568"/><rect x="1806.3" y="137.5" width="11.0" height="1.300" fill="#3a7568"/><rect x="1818.3" y="137.5" width="3.0" height="1.300" fill="#3a7568"/><rect x="1822.3" y="137.5" width="11.0" height="1.300" fill="#3a7568"/><rect x="1834.3" y="137.5" width="10.0" height="1.300" fill="#3a7568"/><rect x="1776.3" y="139.5" width="2.0" height="1.300" fill="#4a5560"/><rect x="1775.3" y="143.5" width="5.0" height="1.300" fill="#5fa9b8"/><rect x="1781.3" y="143.5" width="1.0" height="1.300" fill="#4fb096"/><rect x="1783.3" y="143.5" width="12.0" height="1.300" fill="#5fa9b8"/><rect x="1796.3" y="143.5" width="1.0" height="1.300" fill="#4fb096"/><rect x="1798.3" y="143.5" width="1.0" height="1.300" fill="#b0568a"/><rect x="1800.3" y="143.5" width="7.0" height="1.300" fill="#9aa0a0"/><rect x="1807.3" y="143.5" width="1.0" height="1.300" fill="#4fb096"/><rect x="1808.3" y="143.5" width="17.0" height="1.300" fill="#3fae5c"/><rect x="1825.3" y="143.5" width="1.0" height="1.300" fill="#4fb096"/><rect x="1826.3" y="143.5" width="1.0" height="1.300" fill="#9aa0a0"/><rect x="1775.3" y="145.5" width="5.0" height="1.300" fill="#5fa9b8"/><rect x="1781.3" y="145.5" width="1.0" height="1.300" fill="#4fb096"/><rect x="1783.3" y="145.5" width="14.0" height="1.300" fill="#5fa9b8"/><rect x="1798.3" y="145.5" width="1.0" height="1.300" fill="#4fb096"/><rect x="1800.3" y="145.5" width="1.0" height="1.300" fill="#b0568a"/><rect x="1802.3" y="145.5" width="7.0" height="1.300" fill="#9aa0a0"/><rect x="1809.3" y="145.5" width="1.0" height="1.300" fill="#4fb096"/><rect x="1810.3" y="145.5" width="19.0" height="1.300" fill="#3fae5c"/><rect x="1829.3" y="145.5" width="1.0" height="1.300" fill="#4fb096"/><rect x="1830.3" y="145.5" width="1.0" height="1.300" fill="#9aa0a0"/><rect x="1775.3" y="149.5" width="5.0" height="1.300" fill="#5fa9b8"/><rect x="1781.3" y="149.5" width="14.0" height="1.300" fill="#5fa9b8"/><rect x="1796.3" y="149.5" width="1.0" height="1.300" fill="#4fb096"/><rect x="1777.3" y="151.5" width="11.0" height="1.300" fill="#5fa9b8"/><rect x="1788.3" y="151.5" width="2.0" height="1.300" fill="#b0568a"/><rect x="1791.3" y="151.5" width="1.0" height="1.300" fill="#b0568a"/><rect x="1779.3" y="153.5" width="4.0" height="1.300" fill="#8468b0"/><rect x="1783.3" y="153.5" width="1.0" height="1.300" fill="#b0568a"/><rect x="1784.3" y="153.5" width="5.0" height="1.300" fill="#9aa0a0"/><rect x="1790.3" y="153.5" width="1.0" height="1.300" fill="#b0568a"/><rect x="1792.3" y="153.5" width="3.0" height="1.300" fill="#b0568a"/><rect x="1796.3" y="153.5" width="12.0" height="1.300" fill="#5fa9b8"/><rect x="1808.3" y="153.5" width="2.0" height="1.300" fill="#a9ad68"/><rect x="1810.3" y="153.5" width="1.0" height="1.300" fill="#9aa0a0"/><rect x="1779.3" y="155.5" width="4.0" height="1.300" fill="#8468b0"/><rect x="1783.3" y="155.5" width="1.0" height="1.300" fill="#b0568a"/><rect x="1784.3" y="155.5" width="2.0" height="1.300" fill="#9aa0a0"/><rect x="1787.3" y="155.5" width="1.0" height="1.300" fill="#b0568a"/><rect x="1789.3" y="155.5" width="3.0" height="1.300" fill="#b0568a"/><rect x="1793.3" y="155.5" width="14.0" height="1.300" fill="#5fa9b8"/><rect x="1807.3" y="155.5" width="2.0" height="1.300" fill="#a9ad68"/><rect x="1809.3" y="155.5" width="1.0" height="1.300" fill="#9aa0a0"/><rect x="1777.3" y="157.5" width="1.0" height="1.300" fill="#b0568a"/><rect x="1777.3" y="161.5" width="3.0" height="1.300" fill="#4a5560"/><rect x="1778.3" y="163.5" width="1.0" height="1.300" fill="#4a5560"/><rect x="1780.3" y="163.5" width="7.0" height="1.300" fill="#3a7568"/><rect x="1788.3" y="163.5" width="1.0" height="1.300" fill="#3a7568"/><rect x="1790.3" y="163.5" width="7.0" height="1.300" fill="#3a7568"/><rect x="1798.3" y="163.5" width="11.0" height="1.300" fill="#3a7568"/><rect x="1778.3" y="165.5" width="2.0" height="1.300" fill="#4a5560"/><rect x="1777.3" y="167.5" width="5.0" height="1.300" fill="#b0568a"/><rect x="1783.3" y="167.5" width="14.0" height="1.300" fill="#4fb096"/><rect x="1797.3" y="167.5" width="1.0" height="1.300" fill="#b0568a"/><rect x="1798.3" y="167.5" width="6.0" height="1.300" fill="#b58450"/><rect x="1804.3" y="167.5" width="1.0" height="1.300" fill="#b0568a"/><rect x="1806.3" y="167.5" width="6.0" height="1.300" fill="#b58450"/><rect x="1812.3" y="167.5" width="1.0" height="1.300" fill="#b0568a"/><rect x="1814.3" y="167.5" width="13.0" height="1.300" fill="#b58450"/><rect x="1827.3" y="167.5" width="1.0" height="1.300" fill="#b0568a"/><rect x="1829.3" y="167.5" width="1.0" height="1.300" fill="#b0568a"/><rect x="1779.3" y="169.5" width="5.0" height="1.300" fill="#5fa9b8"/><rect x="1785.3" y="169.5" width="6.0" height="1.300" fill="#8468b0"/><rect x="1792.3" y="169.5" width="1.0" height="1.300" fill="#b0568a"/><rect x="1794.3" y="169.5" width="5.0" height="1.300" fill="#b0568a"/><rect x="1800.3" y="169.5" width="4.0" height="1.300" fill="#8468b0"/><rect x="1804.3" y="169.5" width="1.0" height="1.300" fill="#b0568a"/><rect x="1805.3" y="169.5" width="18.0" height="1.300" fill="#4fb096"/><rect x="1823.3" y="169.5" width="1.0" height="1.300" fill="#a9ad68"/><rect x="1781.3" y="171.5" width="6.0" height="1.300" fill="#b58450"/><rect x="1787.3" y="171.5" width="1.0" height="1.300" fill="#b0568a"/><rect x="1781.3" y="173.5" width="6.0" height="1.300" fill="#b58450"/><rect x="1787.3" y="173.5" width="1.0" height="1.300" fill="#b0568a"/><rect x="1781.3" y="175.5" width="13.0" height="1.300" fill="#b58450"/><rect x="1794.3" y="175.5" width="1.0" height="1.300" fill="#b0568a"/><rect x="1781.3" y="177.5" width="4.0" height="1.300" fill="#8468b0"/><rect x="1785.3" y="177.5" width="1.0" height="1.300" fill="#b0568a"/><rect x="1779.3" y="179.5" width="1.0" height="1.300" fill="#a9ad68"/><rect x="1780.3" y="179.5" width="1.0" height="1.300" fill="#9aa0a0"/><rect x="1779.3" y="183.5" width="5.0" height="1.300" fill="#b0568a"/><rect x="1785.3" y="183.5" width="4.0" height="1.300" fill="#8468b0"/><rect x="1789.3" y="183.5" width="1.0" height="1.300" fill="#b0568a"/><rect x="1790.3" y="183.5" width="5.0" height="1.300" fill="#9aa0a0"/><rect x="1795.3" y="183.5" width="1.0" height="1.300" fill="#b0568a"/><rect x="1796.3" y="183.5" width="3.0" height="1.300" fill="#4fb096"/><rect x="1799.3" y="183.5" width="1.0" height="1.300" fill="#a9ad68"/><rect x="1800.3" y="183.5" width="9.0" height="1.300" fill="#3fae5c"/><rect x="1809.3" y="183.5" width="2.0" height="1.300" fill="#b0568a"/><rect x="1811.3" y="183.5" width="6.0" height="1.300" fill="#8468b0"/><rect x="1817.3" y="183.5" width="1.0" height="1.300" fill="#b0568a"/><rect x="1818.3" y="183.5" width="13.0" height="1.300" fill="#9aa0a0"/><rect x="1831.3" y="183.5" width="1.0" height="1.300" fill="#b0568a"/><rect x="1832.3" y="183.5" width="1.0" height="1.300" fill="#3fae5c"/><rect x="1833.3" y="183.5" width="1.0" height="1.300" fill="#b0568a"/><rect x="1835.3" y="183.5" width="6.0" height="1.300" fill="#8468b0"/><rect x="1841.3" y="183.5" width="1.0" height="1.300" fill="#a9ad68"/><rect x="1842.3" y="183.5" width="1.0" height="1.300" fill="#9aa0a0"/><rect x="1779.3" y="185.5" width="6.0" height="1.300" fill="#b0568a"/><rect x="1786.3" y="185.5" width="6.0" height="1.300" fill="#8468b0"/><rect x="1792.3" y="185.5" width="1.0" height="1.300" fill="#9aa0a0"/><rect x="1777.3" y="187.5" width="1.0" height="1.300" fill="#b0568a"/><rect x="1777.3" y="191.5" width="3.0" height="1.300" fill="#4a5560"/><rect x="1778.3" y="193.5" width="1.0" height="1.300" fill="#4a5560"/><rect x="1780.3" y="193.5" width="8.0" height="1.300" fill="#3a7568"/><rect x="1789.3" y="193.5" width="1.0" height="1.300" fill="#3a7568"/><rect x="1791.3" y="193.5" width="11.0" height="1.300" fill="#3a7568"/><rect x="1803.3" y="193.5" width="2.0" height="1.300" fill="#3a7568"/><rect x="1806.3" y="193.5" width="2.0" height="1.300" fill="#3a7568"/><rect x="1778.3" y="195.5" width="1.0" height="1.300" fill="#4a5560"/><rect x="1780.3" y="195.5" width="4.0" height="1.300" fill="#3a7568"/><rect x="1785.3" y="195.5" width="7.0" height="1.300" fill="#3a7568"/><rect x="1793.3" y="195.5" width="2.0" height="1.300" fill="#3a7568"/><rect x="1796.3" y="195.5" width="7.0" height="1.300" fill="#3a7568"/><rect x="1804.3" y="195.5" width="11.0" height="1.300" fill="#3a7568"/><rect x="1778.3" y="197.5" width="2.0" height="1.300" fill="#4a5560"/><rect x="1777.3" y="199.5" width="5.0" height="1.300" fill="#b0568a"/><rect x="1783.3" y="199.5" width="14.0" height="1.300" fill="#4fb096"/><rect x="1797.3" y="199.5" width="1.0" height="1.300" fill="#b0568a"/><rect x="1798.3" y="199.5" width="13.0" height="1.300" fill="#b58450"/><rect x="1811.3" y="199.5" width="1.0" height="1.300" fill="#b0568a"/><rect x="1813.3" y="199.5" width="1.0" height="1.300" fill="#b0568a"/><rect x="1779.3" y="201.5" width="2.0" height="1.300" fill="#4a5560"/><rect x="1782.3" y="201.5" width="3.0" height="1.300" fill="#4a5560"/><rect x="1786.3" y="201.5" width="5.0" height="1.300" fill="#4a5560"/><rect x="1792.3" y="201.5" width="5.0" height="1.300" fill="#4a5560"/><rect x="1779.3" y="203.5" width="5.0" height="1.300" fill="#5fa9b8"/><rect x="1785.3" y="203.5" width="6.0" height="1.300" fill="#8468b0"/><rect x="1792.3" y="203.5" width="1.0" height="1.300" fill="#b0568a"/><rect x="1794.3" y="203.5" width="5.0" height="1.300" fill="#b0568a"/><rect x="1800.3" y="203.5" width="4.0" height="1.300" fill="#8468b0"/><rect x="1804.3" y="203.5" width="1.0" height="1.300" fill="#b0568a"/><rect x="1805.3" y="203.5" width="5.0" height="1.300" fill="#9aa0a0"/><rect x="1810.3" y="203.5" width="1.0" height="1.300" fill="#b0568a"/><rect x="1811.3" y="203.5" width="3.0" height="1.300" fill="#4fb096"/><rect x="1814.3" y="203.5" width="1.0" height="1.300" fill="#a9ad68"/><rect x="1815.3" y="203.5" width="9.0" height="1.300" fill="#3fae5c"/><rect x="1824.3" y="203.5" width="2.0" height="1.300" fill="#b0568a"/><rect x="1826.3" y="203.5" width="13.0" height="1.300" fill="#b58450"/><rect x="1839.3" y="203.5" width="1.0" height="1.300" fill="#b0568a"/><rect x="1840.3" y="203.5" width="1.0" height="1.300" fill="#3fae5c"/><rect x="1841.3" y="203.5" width="1.0" height="1.300" fill="#a9ad68"/><rect x="1842.3" y="203.5" width="1.0" height="1.300" fill="#9aa0a0"/><rect x="1779.3" y="205.5" width="2.0" height="1.300" fill="#b0568a"/><rect x="1782.3" y="205.5" width="1.0" height="1.300" fill="#a9ad68"/><rect x="1783.3" y="205.5" width="6.0" height="1.300" fill="#8468b0"/><rect x="1789.3" y="205.5" width="1.0" height="1.300" fill="#a9ad68"/><rect x="1791.3" y="205.5" width="1.0" height="1.300" fill="#a9ad68"/><rect x="1781.3" y="207.5" width="6.0" height="1.300" fill="#b0568a"/><rect x="1788.3" y="207.5" width="6.0" height="1.300" fill="#8468b0"/><rect x="1794.3" y="207.5" width="1.0" height="1.300" fill="#9aa0a0"/><rect x="1779.3" y="209.5" width="1.0" height="1.300" fill="#a9ad68"/><rect x="1779.3" y="213.5" width="2.0" height="1.300" fill="#4a5560"/><rect x="1782.3" y="213.5" width="8.0" height="1.300" fill="#4a5560"/><rect x="1791.3" y="213.5" width="2.0" height="1.300" fill="#4a5560"/><rect x="1794.3" y="213.5" width="8.0" height="1.300" fill="#4a5560"/><rect x="1779.3" y="215.5" width="5.0" height="1.300" fill="#5fa9b8"/><rect x="1785.3" y="215.5" width="7.0" height="1.300" fill="#8468b0"/><rect x="1793.3" y="215.5" width="1.0" height="1.300" fill="#b0568a"/><rect x="1795.3" y="215.5" width="5.0" height="1.300" fill="#b0568a"/><rect x="1801.3" y="215.5" width="4.0" height="1.300" fill="#8468b0"/><rect x="1805.3" y="215.5" width="1.0" height="1.300" fill="#b0568a"/><rect x="1806.3" y="215.5" width="2.0" height="1.300" fill="#9aa0a0"/><rect x="1808.3" y="215.5" width="1.0" height="1.300" fill="#b0568a"/><rect x="1809.3" y="215.5" width="5.0" height="1.300" fill="#4fb096"/><rect x="1814.3" y="215.5" width="1.0" height="1.300" fill="#a9ad68"/><rect x="1781.3" y="217.5" width="7.0" height="1.300" fill="#3fae5c"/><rect x="1789.3" y="217.5" width="1.0" height="1.300" fill="#3fae5c"/><rect x="1791.3" y="217.5" width="4.0" height="1.300" fill="#3fae5c"/><rect x="1796.3" y="217.5" width="12.0" height="1.300" fill="#3fae5c"/><rect x="1809.3" y="217.5" width="5.0" height="1.300" fill="#3fae5c"/><rect x="1815.3" y="217.5" width="14.0" height="1.300" fill="#3fae5c"/><rect x="1830.3" y="217.5" width="1.0" height="1.300" fill="#3fae5c"/><rect x="1832.3" y="217.5" width="3.0" height="1.300" fill="#3fae5c"/><rect x="1835.3" y="217.5" width="1.0" height="1.300" fill="#b0568a"/><rect x="1781.3" y="219.5" width="1.0" height="1.300" fill="#8468b0"/><rect x="1782.3" y="219.5" width="13.0" height="1.300" fill="#b58450"/><rect x="1795.3" y="219.5" width="1.0" height="1.300" fill="#8468b0"/><rect x="1796.3" y="219.5" width="1.0" height="1.300" fill="#b0568a"/><rect x="1779.3" y="221.5" width="1.0" height="1.300" fill="#a9ad68"/><rect x="1780.3" y="221.5" width="1.0" height="1.300" fill="#9aa0a0"/><rect x="1779.3" y="225.5" width="2.0" height="1.300" fill="#b0568a"/><rect x="1782.3" y="225.5" width="1.0" height="1.300" fill="#a9ad68"/><rect x="1783.3" y="225.5" width="7.0" height="1.300" fill="#8468b0"/><rect x="1790.3" y="225.5" width="1.0" height="1.300" fill="#b0568a"/><rect x="1791.3" y="225.5" width="6.0" height="1.300" fill="#9aa0a0"/><rect x="1798.3" y="225.5" width="1.0" height="1.300" fill="#b0568a"/><rect x="1800.3" y="225.5" width="1.0" height="1.300" fill="#8468b0"/><rect x="1801.3" y="225.5" width="1.0" height="1.300" fill="#a9ad68"/><rect x="1803.3" y="225.5" width="1.0" height="1.300" fill="#a9ad68"/><rect x="1781.3" y="227.5" width="2.0" height="1.300" fill="#b0568a"/><rect x="1784.3" y="227.5" width="7.0" height="1.300" fill="#8468b0"/><rect x="1791.3" y="227.5" width="3.0" height="1.300" fill="#9aa0a0"/><rect x="1779.3" y="229.5" width="1.0" height="1.300" fill="#a9ad68"/><rect x="1779.3" y="233.5" width="6.0" height="1.300" fill="#b0568a"/><rect x="1786.3" y="233.5" width="4.0" height="1.300" fill="#8468b0"/><rect x="1790.3" y="233.5" width="1.0" height="1.300" fill="#9aa0a0"/><rect x="1777.3" y="235.5" width="1.0" height="1.300" fill="#b0568a"/><rect x="1777.3" y="239.5" width="3.0" height="1.300" fill="#4a5560"/><rect x="1777.3" y="241.5" width="2.0" height="1.300" fill="#4a5560"/><rect x="1779.3" y="241.5" width="4.0" height="1.300" fill="#3a7568"/><rect x="1784.3" y="241.5" width="8.0" height="1.300" fill="#3a7568"/><rect x="1793.3" y="241.5" width="7.0" height="1.300" fill="#3a7568"/><rect x="1801.3" y="241.5" width="7.0" height="1.300" fill="#3a7568"/><rect x="1809.3" y="241.5" width="4.0" height="1.300" fill="#3a7568"/><rect x="1814.3" y="241.5" width="7.0" height="1.300" fill="#3a7568"/><rect x="1777.3" y="243.5" width="3.0" height="1.300" fill="#4a5560"/><rect x="1777.3" y="245.5" width="5.0" height="1.300" fill="#b0568a"/><rect x="1783.3" y="245.5" width="18.0" height="1.300" fill="#4fb096"/><rect x="1801.3" y="245.5" width="1.0" height="1.300" fill="#b0568a"/><rect x="1802.3" y="245.5" width="6.0" height="1.300" fill="#b58450"/><rect x="1808.3" y="245.5" width="1.0" height="1.300" fill="#b0568a"/><rect x="1810.3" y="245.5" width="6.0" height="1.300" fill="#b58450"/><rect x="1816.3" y="245.5" width="1.0" height="1.300" fill="#b0568a"/><rect x="1818.3" y="245.5" width="13.0" height="1.300" fill="#b58450"/><rect x="1831.3" y="245.5" width="1.0" height="1.300" fill="#b0568a"/><rect x="1833.3" y="245.5" width="7.0" height="1.300" fill="#b58450"/><rect x="1840.3" y="245.5" width="1.0" height="1.300" fill="#b0568a"/><rect x="1842.3" y="245.5" width="1.0" height="1.300" fill="#b0568a"/><rect x="1779.3" y="247.5" width="5.0" height="1.300" fill="#5fa9b8"/><rect x="1785.3" y="247.5" width="7.0" height="1.300" fill="#8468b0"/><rect x="1793.3" y="247.5" width="1.0" height="1.300" fill="#b0568a"/><rect x="1795.3" y="247.5" width="3.0" height="1.300" fill="#b0568a"/><rect x="1799.3" y="247.5" width="7.0" height="1.300" fill="#5fa9b8"/><rect x="1806.3" y="247.5" width="2.0" height="1.300" fill="#a9ad68"/><rect x="1808.3" y="247.5" width="1.0" height="1.300" fill="#9aa0a0"/><rect x="1809.3" y="247.5" width="6.0" height="1.300" fill="#8468b0"/><rect x="1815.3" y="247.5" width="1.0" height="1.300" fill="#9aa0a0"/><rect x="1816.3" y="247.5" width="3.0" height="1.300" fill="#a9ad68"/><rect x="1781.3" y="249.5" width="10.0" height="1.300" fill="#4fb096"/><rect x="1791.3" y="249.5" width="1.0" height="1.300" fill="#a9ad68"/><rect x="1792.3" y="249.5" width="2.0" height="1.300" fill="#a9ad68"/><rect x="1795.3" y="249.5" width="2.0" height="1.300" fill="#b0568a"/><rect x="1798.3" y="249.5" width="7.0" height="1.300" fill="#3fae5c"/><rect x="1806.3" y="249.5" width="7.0" height="1.300" fill="#3fae5c"/><rect x="1814.3" y="249.5" width="8.0" height="1.300" fill="#3fae5c"/><rect x="1822.3" y="249.5" width="2.0" height="1.300" fill="#a9ad68"/><rect x="1824.3" y="249.5" width="1.0" height="1.300" fill="#b0568a"/><rect x="1781.3" y="251.5" width="7.0" height="1.300" fill="#b58450"/><rect x="1788.3" y="251.5" width="1.0" height="1.300" fill="#b0568a"/><rect x="1779.3" y="253.5" width="1.0" height="1.300" fill="#a9ad68"/><rect x="1780.3" y="253.5" width="1.0" height="1.300" fill="#9aa0a0"/><rect x="1779.3" y="257.5" width="6.0" height="1.300" fill="#b0568a"/><rect x="1786.3" y="257.5" width="4.0" height="1.300" fill="#8468b0"/><rect x="1790.3" y="257.5" width="1.0" height="1.300" fill="#b0568a"/><rect x="1791.3" y="257.5" width="14.0" height="1.300" fill="#4fb096"/><rect x="1805.3" y="257.5" width="1.0" height="1.300" fill="#a9ad68"/><rect x="1806.3" y="257.5" width="6.0" height="1.300" fill="#b58450"/><rect x="1812.3" y="257.5" width="1.0" height="1.300" fill="#b0568a"/><rect x="1814.3" y="257.5" width="6.0" height="1.300" fill="#b58450"/><rect x="1820.3" y="257.5" width="1.0" height="1.300" fill="#b0568a"/><rect x="1822.3" y="257.5" width="13.0" height="1.300" fill="#b58450"/><rect x="1835.3" y="257.5" width="1.0" height="1.300" fill="#a9ad68"/><rect x="1781.3" y="259.5" width="5.0" height="1.300" fill="#4fb096"/><rect x="1786.3" y="259.5" width="1.0" height="1.300" fill="#b0568a"/><rect x="1788.3" y="259.5" width="6.0" height="1.300" fill="#3fae5c"/><rect x="1781.3" y="261.5" width="7.0" height="1.300" fill="#4fb096"/><rect x="1788.3" y="261.5" width="1.0" height="1.300" fill="#b0568a"/><rect x="1790.3" y="261.5" width="1.0" height="1.300" fill="#a9ad68"/><rect x="1783.3" y="263.5" width="14.0" height="1.300" fill="#3fae5c"/><rect x="1797.3" y="263.5" width="1.0" height="1.300" fill="#b0568a"/><rect x="1799.3" y="263.5" width="7.0" height="1.300" fill="#3fae5c"/><rect x="1783.3" y="265.5" width="12.0" height="1.300" fill="#3fae5c"/><rect x="1795.3" y="265.5" width="1.0" height="1.300" fill="#b0568a"/><rect x="1781.3" y="267.5" width="1.0" height="1.300" fill="#a9ad68"/><rect x="1782.3" y="267.5" width="1.0" height="1.300" fill="#b0568a"/><rect x="1781.3" y="269.5" width="4.0" height="1.300" fill="#4fb096"/><rect x="1785.3" y="269.5" width="1.0" height="1.300" fill="#b0568a"/><rect x="1787.3" y="269.5" width="1.0" height="1.300" fill="#a9ad68"/><rect x="1783.3" y="271.5" width="6.0" height="1.300" fill="#b58450"/><rect x="1789.3" y="271.5" width="1.0" height="1.300" fill="#b0568a"/><rect x="1783.3" y="273.5" width="14.0" height="1.300" fill="#3fae5c"/><rect x="1797.3" y="273.5" width="1.0" height="1.300" fill="#b0568a"/><rect x="1783.3" y="275.5" width="6.0" height="1.300" fill="#b58450"/><rect x="1789.3" y="275.5" width="6.0" height="1.300" fill="#3fae5c"/><rect x="1795.3" y="275.5" width="1.0" height="1.300" fill="#b0568a"/><rect x="1781.3" y="277.5" width="1.0" height="1.300" fill="#a9ad68"/><rect x="1782.3" y="277.5" width="1.0" height="1.300" fill="#b0568a"/><rect x="1779.3" y="279.5" width="1.0" height="1.300" fill="#a9ad68"/><rect x="1780.3" y="279.5" width="2.0" height="1.300" fill="#9aa0a0"/><rect x="1777.3" y="281.5" width="1.0" height="1.300" fill="#b0568a"/><rect x="1777.3" y="287.5" width="5.0" height="1.300" fill="#b0568a"/><rect x="1783.3" y="287.5" width="23.0" height="1.300" fill="#4fb096"/><rect x="1806.3" y="287.5" width="1.0" height="1.300" fill="#b0568a"/><rect x="1807.3" y="287.5" width="6.0" height="1.300" fill="#b58450"/><rect x="1813.3" y="287.5" width="1.0" height="1.300" fill="#b0568a"/><rect x="1815.3" y="287.5" width="6.0" height="1.300" fill="#b58450"/><rect x="1821.3" y="287.5" width="1.0" height="1.300" fill="#b0568a"/><rect x="1823.3" y="287.5" width="13.0" height="1.300" fill="#b58450"/><rect x="1836.3" y="287.5" width="1.0" height="1.300" fill="#b0568a"/><rect x="1838.3" y="287.5" width="1.0" height="1.300" fill="#b0568a"/><rect x="1779.3" y="289.5" width="5.0" height="1.300" fill="#5fa9b8"/><rect x="1785.3" y="289.5" width="10.0" height="1.300" fill="#8468b0"/><rect x="1796.3" y="289.5" width="1.0" height="1.300" fill="#b0568a"/><rect x="1798.3" y="289.5" width="1.0" height="1.300" fill="#8468b0"/><rect x="1799.3" y="289.5" width="1.0" height="1.300" fill="#9aa0a0"/><rect x="1779.3" y="291.5" width="5.0" height="1.300" fill="#5fa9b8"/><rect x="1785.3" y="291.5" width="9.0" height="1.300" fill="#8468b0"/><rect x="1795.3" y="291.5" width="1.0" height="1.300" fill="#b0568a"/><rect x="1797.3" y="291.5" width="4.0" height="1.300" fill="#8468b0"/><rect x="1801.3" y="291.5" width="1.0" height="1.300" fill="#9aa0a0"/><rect x="1779.3" y="293.5" width="5.0" height="1.300" fill="#5fa9b8"/><rect x="1785.3" y="293.5" width="8.0" height="1.300" fill="#8468b0"/><rect x="1794.3" y="293.5" width="1.0" height="1.300" fill="#b0568a"/><rect x="1796.3" y="293.5" width="1.0" height="1.300" fill="#8468b0"/><rect x="1797.3" y="293.5" width="1.0" height="1.300" fill="#9aa0a0"/><rect x="1779.3" y="297.5" width="3.0" height="1.300" fill="#b0568a"/><rect x="1783.3" y="297.5" width="1.0" height="1.300" fill="#a9ad68"/><rect x="1784.3" y="297.5" width="3.0" height="1.300" fill="#5fa9b8"/><rect x="1788.3" y="297.5" width="7.0" height="1.300" fill="#8468b0"/><rect x="1796.3" y="297.5" width="1.0" height="1.300" fill="#b0568a"/><rect x="1798.3" y="297.5" width="1.0" height="1.300" fill="#8468b0"/><rect x="1799.3" y="297.5" width="1.0" height="1.300" fill="#9aa0a0"/><rect x="1801.3" y="297.5" width="7.0" height="1.300" fill="#8468b0"/><rect x="1809.3" y="297.5" width="2.0" height="1.300" fill="#b0568a"/><rect x="1812.3" y="297.5" width="10.0" height="1.300" fill="#8468b0"/><rect x="1822.3" y="297.5" width="1.0" height="1.300" fill="#9aa0a0"/><rect x="1824.3" y="297.5" width="7.0" height="1.300" fill="#8468b0"/><rect x="1831.3" y="297.5" width="2.0" height="1.300" fill="#b0568a"/><rect x="1833.3" y="297.5" width="1.0" height="1.300" fill="#a9ad68"/><rect x="1835.3" y="297.5" width="1.0" height="1.300" fill="#a9ad68"/><rect x="1781.3" y="299.5" width="3.0" height="1.300" fill="#b0568a"/><rect x="1785.3" y="299.5" width="1.0" height="1.300" fill="#8468b0"/><rect x="1783.3" y="301.5" width="5.0" height="1.300" fill="#5fa9b8"/><rect x="1789.3" y="301.5" width="6.0" height="1.300" fill="#8468b0"/><rect x="1796.3" y="301.5" width="1.0" height="1.300" fill="#b0568a"/><rect x="1798.3" y="301.5" width="5.0" height="1.300" fill="#b0568a"/><rect x="1804.3" y="301.5" width="4.0" height="1.300" fill="#8468b0"/><rect x="1808.3" y="301.5" width="1.0" height="1.300" fill="#b0568a"/><rect x="1809.3" y="301.5" width="18.0" height="1.300" fill="#4fb096"/><rect x="1827.3" y="301.5" width="1.0" height="1.300" fill="#8468b0"/><rect x="1785.3" y="303.5" width="6.0" height="1.300" fill="#b58450"/><rect x="1791.3" y="303.5" width="1.0" height="1.300" fill="#b0568a"/><rect x="1785.3" y="305.5" width="6.0" height="1.300" fill="#b58450"/><rect x="1791.3" y="305.5" width="1.0" height="1.300" fill="#b0568a"/><rect x="1785.3" y="307.5" width="13.0" height="1.300" fill="#b58450"/><rect x="1798.3" y="307.5" width="1.0" height="1.300" fill="#b0568a"/><rect x="1785.3" y="309.5" width="4.0" height="1.300" fill="#8468b0"/><rect x="1789.3" y="309.5" width="1.0" height="1.300" fill="#b0568a"/><rect x="1783.3" y="311.5" width="1.0" height="1.300" fill="#8468b0"/><rect x="1784.3" y="311.5" width="1.0" height="1.300" fill="#9aa0a0"/><rect x="1783.3" y="315.5" width="5.0" height="1.300" fill="#b0568a"/><rect x="1789.3" y="315.5" width="4.0" height="1.300" fill="#8468b0"/><rect x="1793.3" y="315.5" width="1.0" height="1.300" fill="#b0568a"/><rect x="1794.3" y="315.5" width="5.0" height="1.300" fill="#9aa0a0"/><rect x="1799.3" y="315.5" width="1.0" height="1.300" fill="#b0568a"/><rect x="1800.3" y="315.5" width="3.0" height="1.300" fill="#4fb096"/><rect x="1803.3" y="315.5" width="1.0" height="1.300" fill="#8468b0"/><rect x="1804.3" y="315.5" width="9.0" height="1.300" fill="#3fae5c"/><rect x="1813.3" y="315.5" width="2.0" height="1.300" fill="#b0568a"/><rect x="1815.3" y="315.5" width="6.0" height="1.300" fill="#8468b0"/><rect x="1821.3" y="315.5" width="1.0" height="1.300" fill="#b0568a"/><rect x="1822.3" y="315.5" width="13.0" height="1.300" fill="#9aa0a0"/><rect x="1835.3" y="315.5" width="1.0" height="1.300" fill="#b0568a"/><rect x="1836.3" y="315.5" width="1.0" height="1.300" fill="#3fae5c"/><rect x="1837.3" y="315.5" width="1.0" height="1.300" fill="#b0568a"/><rect x="1839.3" y="315.5" width="6.0" height="1.300" fill="#8468b0"/><rect x="1845.3" y="315.5" width="1.0" height="1.300" fill="#8468b0"/><rect x="1846.3" y="315.5" width="1.0" height="1.300" fill="#9aa0a0"/><rect x="1783.3" y="317.5" width="6.0" height="1.300" fill="#b0568a"/><rect x="1790.3" y="317.5" width="6.0" height="1.300" fill="#8468b0"/><rect x="1796.3" y="317.5" width="1.0" height="1.300" fill="#9aa0a0"/><rect x="1781.3" y="319.5" width="1.0" height="1.300" fill="#8468b0"/><rect x="1783.3" y="319.5" width="5.0" height="1.300" fill="#b0568a"/><rect x="1789.3" y="319.5" width="1.0" height="1.300" fill="#8468b0"/><rect x="1790.3" y="319.5" width="5.0" height="1.300" fill="#b58450"/><rect x="1795.3" y="319.5" width="1.0" height="1.300" fill="#8468b0"/><rect x="1797.3" y="319.5" width="1.0" height="1.300" fill="#8468b0"/><rect x="1783.3" y="321.5" width="2.0" height="1.300" fill="#b0568a"/><rect x="1786.3" y="321.5" width="1.0" height="1.300" fill="#4fb096"/><rect x="1787.3" y="321.5" width="7.0" height="1.300" fill="#8468b0"/><rect x="1795.3" y="321.5" width="3.0" height="1.300" fill="#b0568a"/><rect x="1799.3" y="321.5" width="10.0" height="1.300" fill="#8468b0"/><rect x="1809.3" y="321.5" width="1.0" height="1.300" fill="#4fb096"/><rect x="1811.3" y="321.5" width="1.0" height="1.300" fill="#4fb096"/><rect x="1785.3" y="323.5" width="5.0" height="1.300" fill="#b0568a"/><rect x="1791.3" y="323.5" width="3.0" height="1.300" fill="#b0568a"/><rect x="1795.3" y="323.5" width="5.0" height="1.300" fill="#5fa9b8"/><rect x="1800.3" y="323.5" width="1.0" height="1.300" fill="#4fb096"/><rect x="1787.3" y="325.5" width="8.0" height="1.300" fill="#3fae5c"/><rect x="1796.3" y="325.5" width="6.0" height="1.300" fill="#3fae5c"/><rect x="1803.3" y="325.5" width="5.0" height="1.300" fill="#3fae5c"/><rect x="1809.3" y="325.5" width="2.0" height="1.300" fill="#b0568a"/><rect x="1811.3" y="325.5" width="10.0" height="1.300" fill="#8468b0"/><rect x="1821.3" y="325.5" width="1.0" height="1.300" fill="#b0568a"/><rect x="1822.3" y="325.5" width="8.0" height="1.300" fill="#3fae5c"/><rect x="1830.3" y="325.5" width="2.0" height="1.300" fill="#b0568a"/><rect x="1832.3" y="325.5" width="5.0" height="1.300" fill="#b58450"/><rect x="1837.3" y="325.5" width="1.0" height="1.300" fill="#b0568a"/><rect x="1838.3" y="325.5" width="7.0" height="1.300" fill="#9aa0a0"/><rect x="1845.3" y="325.5" width="1.0" height="1.300" fill="#b0568a"/><rect x="1846.3" y="325.5" width="1.0" height="1.300" fill="#3fae5c"/><rect x="1847.3" y="325.5" width="1.0" height="1.300" fill="#b0568a"/><rect x="1785.3" y="327.5" width="1.0" height="1.300" fill="#4fb096"/><rect x="1786.3" y="327.5" width="1.0" height="1.300" fill="#9aa0a0"/><rect x="1783.3" y="329.5" width="1.0" height="1.300" fill="#4fb096"/><rect x="1783.3" y="331.5" width="5.0" height="1.300" fill="#5fa9b8"/><rect x="1789.3" y="331.5" width="5.0" height="1.300" fill="#8468b0"/><rect x="1795.3" y="331.5" width="1.0" height="1.300" fill="#b0568a"/><rect x="1797.3" y="331.5" width="9.0" height="1.300" fill="#8468b0"/><rect x="1807.3" y="331.5" width="1.0" height="1.300" fill="#b0568a"/><rect x="1809.3" y="331.5" width="4.0" height="1.300" fill="#5fa9b8"/><rect x="1813.3" y="331.5" width="1.0" height="1.300" fill="#b0568a"/><rect x="1814.3" y="331.5" width="3.0" height="1.300" fill="#4fb096"/><rect x="1817.3" y="331.5" width="1.0" height="1.300" fill="#4fb096"/><rect x="1818.3" y="331.5" width="11.0" height="1.300" fill="#8468b0"/><rect x="1829.3" y="331.5" width="1.0" height="1.300" fill="#b0568a"/><rect x="1831.3" y="331.5" width="7.0" height="1.300" fill="#8468b0"/><rect x="1839.3" y="331.5" width="1.0" height="1.300" fill="#b0568a"/><rect x="1841.3" y="331.5" width="1.0" height="1.300" fill="#8468b0"/><rect x="1842.3" y="331.5" width="1.0" height="1.300" fill="#4fb096"/><rect x="1843.3" y="331.5" width="1.0" height="1.300" fill="#9aa0a0"/><rect x="1783.3" y="333.5" width="5.0" height="1.300" fill="#b0568a"/><rect x="1789.3" y="333.5" width="3.0" height="1.300" fill="#b0568a"/><rect x="1793.3" y="333.5" width="7.0" height="1.300" fill="#5fa9b8"/><rect x="1800.3" y="333.5" width="1.0" height="1.300" fill="#4fb096"/><rect x="1801.3" y="333.5" width="9.0" height="1.300" fill="#4fb096"/><rect x="1811.3" y="333.5" width="2.0" height="1.300" fill="#b0568a"/><rect x="1814.3" y="333.5" width="10.0" height="1.300" fill="#4fb096"/><rect x="1824.3" y="333.5" width="9.0" height="1.300" fill="#4fb096"/><rect x="1833.3" y="333.5" width="1.0" height="1.300" fill="#b0568a"/><rect x="1835.3" y="333.5" width="5.0" height="1.300" fill="#8468b0"/><rect x="1840.3" y="333.5" width="2.0" height="1.300" fill="#4fb096"/><rect x="1842.3" y="333.5" width="1.0" height="1.300" fill="#9aa0a0"/><rect x="1781.3" y="335.5" width="1.0" height="1.300" fill="#8468b0"/><rect x="1779.3" y="337.5" width="1.0" height="1.300" fill="#a9ad68"/><rect x="1777.3" y="339.5" width="1.0" height="1.300" fill="#b0568a"/><rect x="1777.3" y="343.5" width="5.0" height="1.300" fill="#b0568a"/><rect x="1783.3" y="343.5" width="18.0" height="1.300" fill="#4fb096"/><rect x="1801.3" y="343.5" width="1.0" height="1.300" fill="#b0568a"/><rect x="1802.3" y="343.5" width="6.0" height="1.300" fill="#b58450"/><rect x="1808.3" y="343.5" width="1.0" height="1.300" fill="#b0568a"/><rect x="1810.3" y="343.5" width="6.0" height="1.300" fill="#b58450"/><rect x="1816.3" y="343.5" width="1.0" height="1.300" fill="#b0568a"/><rect x="1818.3" y="343.5" width="13.0" height="1.300" fill="#b58450"/><rect x="1831.3" y="343.5" width="1.0" height="1.300" fill="#b0568a"/><rect x="1833.3" y="343.5" width="1.0" height="1.300" fill="#b0568a"/><rect x="1779.3" y="345.5" width="2.0" height="1.300" fill="#4a5560"/><rect x="1782.3" y="345.5" width="8.0" height="1.300" fill="#4a5560"/><rect x="1791.3" y="345.5" width="7.0" height="1.300" fill="#4a5560"/><rect x="1799.3" y="345.5" width="7.0" height="1.300" fill="#4a5560"/><rect x="1807.3" y="345.5" width="4.0" height="1.300" fill="#4a5560"/><rect x="1812.3" y="345.5" width="2.0" height="1.300" fill="#4a5560"/><rect x="1815.3" y="345.5" width="3.0" height="1.300" fill="#4a5560"/><rect x="1779.3" y="347.5" width="6.0" height="1.300" fill="#b0568a"/><rect x="1786.3" y="347.5" width="1.0" height="1.300" fill="#a9ad68"/><rect x="1781.3" y="349.5" width="7.0" height="1.300" fill="#9aa0a0"/><rect x="1788.3" y="349.5" width="1.0" height="1.300" fill="#b0568a"/><rect x="1790.3" y="349.5" width="4.0" height="1.300" fill="#8468b0"/><rect x="1794.3" y="349.5" width="1.0" height="1.300" fill="#b0568a"/><rect x="1781.3" y="351.5" width="13.0" height="1.300" fill="#9aa0a0"/><rect x="1794.3" y="351.5" width="1.0" height="1.300" fill="#b0568a"/><rect x="1796.3" y="351.5" width="4.0" height="1.300" fill="#3fae5c"/><rect x="1800.3" y="351.5" width="2.0" height="1.300" fill="#b0568a"/><rect x="1802.3" y="351.5" width="4.0" height="1.300" fill="#5fa9b8"/><rect x="1806.3" y="351.5" width="1.0" height="1.300" fill="#b0568a"/><rect x="1807.3" y="351.5" width="3.0" height="1.300" fill="#4fb096"/><rect x="1810.3" y="351.5" width="2.0" height="1.300" fill="#8468b0"/><rect x="1812.3" y="351.5" width="1.0" height="1.300" fill="#b0568a"/><rect x="1813.3" y="351.5" width="1.0" height="1.300" fill="#3fae5c"/><rect x="1814.3" y="351.5" width="1.0" height="1.300" fill="#b0568a"/><rect x="1781.3" y="353.5" width="6.0" height="1.300" fill="#9aa0a0"/><rect x="1787.3" y="353.5" width="1.0" height="1.300" fill="#b0568a"/><rect x="1781.3" y="355.5" width="6.0" height="1.300" fill="#9aa0a0"/><rect x="1787.3" y="355.5" width="1.0" height="1.300" fill="#b0568a"/><rect x="1781.3" y="357.5" width="9.0" height="1.300" fill="#9aa0a0"/><rect x="1790.3" y="357.5" width="1.0" height="1.300" fill="#b0568a"/><rect x="1792.3" y="357.5" width="3.0" height="1.300" fill="#b0568a"/><rect x="1796.3" y="357.5" width="4.0" height="1.300" fill="#5fa9b8"/><rect x="1800.3" y="357.5" width="2.0" height="1.300" fill="#8468b0"/><rect x="1802.3" y="357.5" width="1.0" height="1.300" fill="#b0568a"/><rect x="1803.3" y="357.5" width="11.0" height="1.300" fill="#4fb096"/><rect x="1814.3" y="357.5" width="2.0" height="1.300" fill="#8468b0"/><rect x="1816.3" y="357.5" width="1.0" height="1.300" fill="#b0568a"/><rect x="1779.3" y="359.5" width="1.0" height="1.300" fill="#a9ad68"/><rect x="1780.3" y="359.5" width="1.0" height="1.300" fill="#9aa0a0"/><rect x="1777.3" y="361.5" width="1.0" height="1.300" fill="#b0568a"/><rect x="1775.3" y="363.5" width="1.0" height="1.300" fill="#4fb096"/><rect x="1775.3" y="367.5" width="6.0" height="1.300" fill="#9aa0a0"/><rect x="1781.3" y="367.5" width="1.0" height="1.300" fill="#b0568a"/><rect x="1782.3" y="367.5" width="7.0" height="1.300" fill="#9aa0a0"/><rect x="1790.3" y="367.5" width="1.0" height="1.300" fill="#b0568a"/><rect x="1792.3" y="367.5" width="1.0" height="1.300" fill="#4fb096"/><rect x="1794.3" y="367.5" width="14.0" height="1.300" fill="#8468b0"/><rect x="1809.3" y="367.5" width="1.0" height="1.300" fill="#4fb096"/><rect x="1810.3" y="367.5" width="1.0" height="1.300" fill="#9aa0a0"/></svg>
<div class="abs" style="left:0;top:1379.500px;width:1870px;height:29.500px;background:#080f12;border-top:1.500px solid #262c30"></div>
<div class="abs" style="left:0;top:1381px;width:426px;height:28px;background:#70f5d1;border-radius:0 0 0 10px"></div>
<svg class="abs" style="left:14px;top:1384px" width="18" height="20" viewBox="0 0 18 20" fill="none" stroke="#0a1714" stroke-width="1.500" stroke-linecap="round" stroke-linejoin="round"><path d="M2 8.500l7 5.700L2 19.800M17 .800l-7 5.700L17 12.200" transform="scale(1 .92)"/></svg>
<div class="t" style="left:40.5px;top:1385px;font-size:18.12px;line-height:20px;color:#0a1714;">Dev Container: 3Square-3square-two @ des...</div>
<svg class="abs" style="left:439px;top:1383px" width="22" height="24" viewBox="0 0 22 24" fill="none" stroke="#b1b7c0" stroke-width="1.300" stroke-linecap="round" stroke-linejoin="round"><circle cx="4.500" cy="4" r="2.500"/><circle cx="4.500" cy="19.500" r="2.500"/><path d="M4.500 6.500v10.500M4.500 14c0-3 2-4 5-4.500"/><circle cx="14.500" cy="17.500" r="5.300" fill="#b1b7c0" stroke="none"/><path d="M14.500 14.500v6M11.900 16l5.200 3M17.100 16l-5.200 3" stroke="#080f12" stroke-width="1.200"/></svg>
<div class="t" style="left:465.8px;top:1384px;font-size:18.81px;line-height:21px;color:#b1b7c0;">dev-promo-video*</div>
<svg class="abs" style="left:626px;top:1384px" width="20" height="22" viewBox="0 0 20 22" fill="none" stroke="#b1b7c0" stroke-width="1.300" stroke-linecap="round" stroke-linejoin="round"><path d="M3.200 14.500a7.600 7.600 0 0 1 5.300-11.300M6.300 .800l2.700 2.400-2.500 2.600M16.800 7.500a7.600 7.600 0 0 1-5.300 11.300M13.700 21.200l-2.700-2.400 2.500-2.600"/></svg>
<svg class="abs" style="left:671px;top:1384px" width="20" height="22" viewBox="0 0 20 22" fill="none" stroke="#b1b7c0" stroke-width="1.300" stroke-linecap="round" stroke-linejoin="round"><circle cx="4" cy="3.500" r="2.400"/><circle cx="4" cy="18.500" r="2.400"/><circle cx="16" cy="8.500" r="2.400"/><path d="M4 6v10M10 1v20M16 11c0 3-2.500 4-6 4.500"/></svg>
<svg class="abs" style="left:718px;top:1384px" width="20" height="20" viewBox="0 0 20 20" fill="none" stroke="#b1b7c0" stroke-width="1.300" stroke-linecap="round" stroke-linejoin="round"><path d="M18.500 1.500c-5 0-9 2.500-11.500 8l3.500 3.500c5.500-2.500 8-6.500 8-11.500zM7 9.500l-4 .500-1.500 2.500 3.500.500M10.500 13l-.5 4-2.500 1.500-.5-3.500M5 13.500c-1.500.500-2.500 2-2.500 4 2 0 3.500-1 4-2.500"/><circle cx="13.500" cy="6.500" r="1.500"/></svg>
<svg class="abs" style="left:740px;top:1384px" width="21" height="21" viewBox="0 0 21 21" fill="none" stroke="#b1b7c0" stroke-width="1.300" stroke-linecap="round" stroke-linejoin="round"><path d="M1.500 19.500l3.500-3.500M5 11.500l4.500 4.500 2-2a3.200 3.200 0 0 0-4.500-4.500zM16 9.500L11.500 5l-2 2a3.200 3.200 0 0 0 4.500 4.500zM16 5l3.500-3.500M9 8.500l-1.500-1.500M13.500 13l-1.500-1.500" /></svg>
<div class="t" style="left:768.0px;top:1385px;font-size:17.82px;line-height:20px;color:#b1b7c0;">Launchpad</div>
<svg class="abs" style="left:882px;top:1384px" width="20" height="20" viewBox="0 0 20 20" fill="none" stroke="#b1b7c0" stroke-width="1.300" stroke-linecap="round" stroke-linejoin="round"><circle cx="10" cy="10" r="8.700"/><path d="M6.500 6.500l7 7M13.500 6.500l-7 7"/></svg>
<div class="t" style="left:909.0px;top:1385px;font-size:17.4px;line-height:20px;color:#b1b7c0;">0</div>
<svg class="abs" style="left:926px;top:1384px" width="20" height="20" viewBox="0 0 20 20" fill="none" stroke="#b1b7c0" stroke-width="1.300" stroke-linecap="round" stroke-linejoin="round"><path d="M10 1.500L19 18H1z"/><path d="M10 7.500v5.500M10 15.300v.2"/></svg>
<div class="t" style="left:953.0px;top:1385px;font-size:17.4px;line-height:20px;color:#b1b7c0;">0</div>
<svg class="abs" style="left:988px;top:1384px" width="20" height="20" viewBox="0 0 20 20" fill="none" stroke="#b1b7c0" stroke-width="1.300" stroke-linecap="round" stroke-linejoin="round"><circle cx="10" cy="7.500" r="2"/><path d="M10 9.500L6 19M10 9.500L14 19M7.500 15h5M5.500 11.500a6 6 0 0 1 0-8M14.500 11.500a6 6 0 0 0 0-8M2.800 13.500a9.500 9.500 0 0 1 0-12M17.200 13.500a9.500 9.500 0 0 0 0-12"/></svg>
<div class="t" style="left:1015.0px;top:1385px;font-size:17.89px;line-height:20px;color:#b1b7c0;">15</div>
<svg class="abs" style="left:1060px;top:1383px" width="23" height="22" viewBox="0 0 23 22" fill="none" stroke="#b1b7c0" stroke-width="1.300" stroke-linecap="round" stroke-linejoin="round"><path d="M2 8h14v6a6 6 0 0 1-6 6H8a6 6 0 0 1-6-6zM16 9.500h2a2.700 2.700 0 0 1 0 5.500h-2.300M6 5.500c-1-1.500 1-2.500 0-4M9.500 5.500c-1-1.500 1-2.500 0-4M13 5.500c-1-1.500 1-2.500 0-4"/></svg>
<div class="t" style="left:1086.7px;top:1385px;font-size:17.45px;line-height:20px;color:#b1b7c0;">Java: Ready</div>
<div class="t" style="left:1207.4px;top:1384px;font-size:18.81px;line-height:21px;color:#b1b7c0;">-- NORMAL --</div>
<div class="abs" style="left:1585px;top:1381px;width:277px;height:28px;background:#70f5d1"></div>
<svg class="abs" style="left:1597px;top:1383.500px" width="22" height="22" viewBox="0 0 22 22" fill="none" stroke="#0a1714" stroke-width="1.400" stroke-linecap="round"><circle cx="9" cy="9" r="7.300"/><path d="M14.300 14.300l5.200 5.200M9 5.500v7M5.500 9h7"/></svg>
<div class="t" style="left:1643.8px;top:1385px;font-size:17.88px;line-height:20px;color:#0a1714;">Screen Reader Optimized</div>
</div>
</body>
</html>
